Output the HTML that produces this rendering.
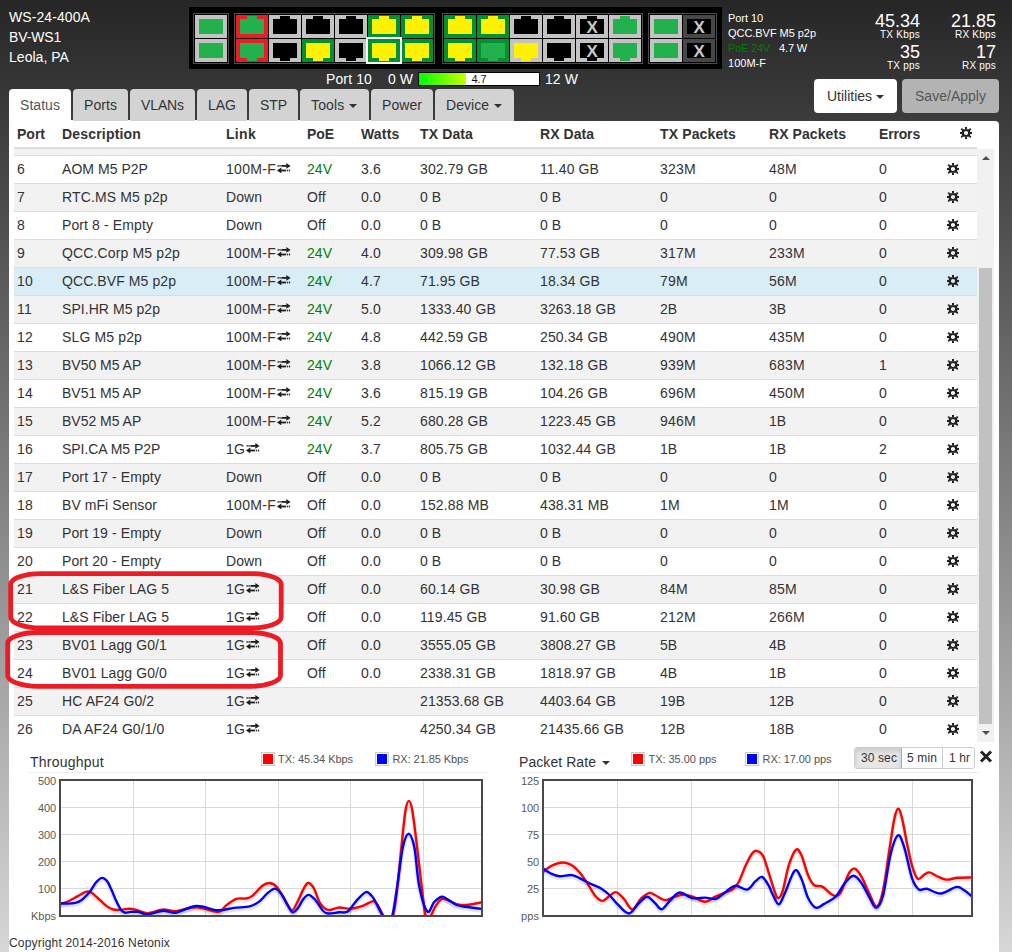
<!DOCTYPE html><html><head><meta charset="utf-8"><style>html,body{margin:0;padding:0;}body{width:1012px;height:952px;overflow:hidden;position:relative;font-family:"Liberation Sans",sans-serif;background:linear-gradient(180deg,#262626 0px,#d7d7d7 952px);}.t{position:absolute;white-space:pre;}.r{position:absolute;box-sizing:content-box;}</style></head><body>
<div class="t" style="left:9px;top:10.00px;font-size:14px;line-height:14px;color:#fff;font-weight:normal;letter-spacing:0.086px;">WS-24-400A</div>
<div class="t" style="left:9px;top:30.00px;font-size:14px;line-height:14px;color:#fff;font-weight:normal;letter-spacing:-0.113px;">BV-WS1</div>
<div class="t" style="left:9px;top:50.00px;font-size:14px;line-height:14px;color:#fff;font-weight:normal;letter-spacing:0.032px;">Leola, PA</div>
<div class="t" style="left:728px;top:13.00px;font-size:11px;line-height:11px;color:#fff;font-weight:normal;letter-spacing:-0.066px;">Port 10</div>
<div class="t" style="left:728px;top:28.00px;font-size:11px;line-height:11px;color:#fff;font-weight:normal;letter-spacing:-0.046px;">QCC.BVF M5 p2p</div>
<div class="t" style="left:728px;top:43.00px;font-size:11px;line-height:11px;color:#008000;font-weight:normal;letter-spacing:-0.203px;">PoE 24V</div>
<div class="t" style="left:779px;top:43.00px;font-size:11px;line-height:11px;color:#fff;font-weight:normal;letter-spacing:-0.146px;">4.7 W</div>
<div class="t" style="left:728px;top:58.00px;font-size:11px;line-height:11px;color:#fff;font-weight:normal;letter-spacing:0.017px;">100M-F</div>
<div class="t" style="right:92px;top:12.00px;font-size:18px;line-height:18px;color:#fff;font-weight:normal;">45.34</div>
<div class="t" style="right:92px;top:30.00px;font-size:10px;line-height:10px;color:#fff;font-weight:normal;letter-spacing:0.236px;">TX Kbps</div>
<div class="t" style="right:92px;top:43.00px;font-size:18px;line-height:18px;color:#fff;font-weight:normal;letter-spacing:-0.011px;">35</div>
<div class="t" style="right:92px;top:61.00px;font-size:10px;line-height:10px;color:#fff;font-weight:normal;letter-spacing:0.220px;">TX pps</div>
<div class="t" style="right:16px;top:12.00px;font-size:18px;line-height:18px;color:#fff;font-weight:normal;">21.85</div>
<div class="t" style="right:16px;top:30.00px;font-size:10px;line-height:10px;color:#fff;font-weight:normal;letter-spacing:0.220px;">RX Kbps</div>
<div class="t" style="right:16px;top:43.00px;font-size:18px;line-height:18px;color:#fff;font-weight:normal;letter-spacing:-0.011px;">17</div>
<div class="t" style="right:16px;top:61.00px;font-size:10px;line-height:10px;color:#fff;font-weight:normal;letter-spacing:0.201px;">RX pps</div>
<div class="t" style="left:326px;top:72.00px;font-size:14px;line-height:14px;color:#fff;font-weight:normal;letter-spacing:0.123px;">Port 10</div>
<div class="t" style="left:388px;top:72.00px;font-size:14px;line-height:14px;color:#fff;font-weight:normal;letter-spacing:0.037px;">0 W</div>
<div class="r" style="left:418px;top:72px;width:120px;height:12px;border:1px solid #000;background:#fff"></div>
<div class="r" style="left:419px;top:73px;width:47px;height:12px;background:linear-gradient(90deg,#00ff00,#c8ff00)"></div>
<div class="t" style="left:479px;transform:translateX(-50%);top:74.00px;font-size:11px;line-height:11px;color:#111;font-weight:normal;letter-spacing:-0.097px;">4.7</div>
<div class="t" style="left:545px;top:72.00px;font-size:14px;line-height:14px;color:#fff;font-weight:normal;letter-spacing:0.081px;">12 W</div>
<div class="r" style="left:189px;top:7px;width:533px;height:62px;background:#000;"></div>
<div class="r" style="left:193px;top:13px;width:34px;height:49px;border:1px solid #4d4d4d"></div>
<div class="r" style="left:234px;top:13px;width:199px;height:49px;border:1px solid #4d4d4d"></div>
<div class="r" style="left:442px;top:13px;width:199px;height:49px;border:1px solid #4d4d4d"></div>
<div class="r" style="left:648px;top:13px;width:67px;height:49px;border:1px solid #4d4d4d"></div>
<div class="r" style="left:195px;top:15px;width:32px;height:23px;background:#c3c3c3;"></div>
<div class="r" style="left:199px;top:19px;width:24px;height:15px;background:#22b14c;"></div>
<div class="r" style="left:195px;top:39px;width:32px;height:23px;background:#c3c3c3;"></div>
<div class="r" style="left:199px;top:43px;width:24px;height:15px;background:#22b14c;"></div>
<div class="r" style="left:236px;top:15px;width:32px;height:23px;background:#ed1c24;"></div>
<div class="r" style="left:240px;top:19px;width:24px;height:15px;background:#22b14c;"></div>
<div class="r" style="left:247px;top:16px;width:10px;height:3px;background:#22b14c;"></div>
<div class="r" style="left:269px;top:15px;width:32px;height:23px;background:#c3c3c3;"></div>
<div class="r" style="left:273px;top:19px;width:24px;height:15px;background:#000;"></div>
<div class="r" style="left:280px;top:16px;width:10px;height:3px;background:#000;"></div>
<div class="r" style="left:302px;top:15px;width:32px;height:23px;background:#c3c3c3;"></div>
<div class="r" style="left:306px;top:19px;width:24px;height:15px;background:#000;"></div>
<div class="r" style="left:313px;top:16px;width:10px;height:3px;background:#000;"></div>
<div class="r" style="left:335px;top:15px;width:32px;height:23px;background:#c3c3c3;"></div>
<div class="r" style="left:339px;top:19px;width:24px;height:15px;background:#000;"></div>
<div class="r" style="left:346px;top:16px;width:10px;height:3px;background:#000;"></div>
<div class="r" style="left:368px;top:15px;width:32px;height:23px;background:#00922e;"></div>
<div class="r" style="left:372px;top:19px;width:24px;height:15px;background:#fff200;"></div>
<div class="r" style="left:379px;top:16px;width:10px;height:3px;background:#fff200;"></div>
<div class="r" style="left:401px;top:15px;width:32px;height:23px;background:#00922e;"></div>
<div class="r" style="left:405px;top:19px;width:24px;height:15px;background:#fff200;"></div>
<div class="r" style="left:412px;top:16px;width:10px;height:3px;background:#fff200;"></div>
<div class="r" style="left:236px;top:39px;width:32px;height:23px;background:#ed1c24;"></div>
<div class="r" style="left:240px;top:43px;width:24px;height:15px;background:#22b14c;"></div>
<div class="r" style="left:247px;top:58px;width:10px;height:3px;background:#22b14c;"></div>
<div class="r" style="left:269px;top:39px;width:32px;height:23px;background:#c3c3c3;"></div>
<div class="r" style="left:273px;top:43px;width:24px;height:15px;background:#000;"></div>
<div class="r" style="left:280px;top:58px;width:10px;height:3px;background:#000;"></div>
<div class="r" style="left:302px;top:39px;width:32px;height:23px;background:#00922e;"></div>
<div class="r" style="left:306px;top:43px;width:24px;height:15px;background:#fff200;"></div>
<div class="r" style="left:313px;top:58px;width:10px;height:3px;background:#fff200;"></div>
<div class="r" style="left:335px;top:39px;width:32px;height:23px;background:#c3c3c3;"></div>
<div class="r" style="left:339px;top:43px;width:24px;height:15px;background:#000;"></div>
<div class="r" style="left:346px;top:58px;width:10px;height:3px;background:#000;"></div>
<div class="r" style="left:368px;top:39px;width:32px;height:23px;background:#00922e;"></div>
<div class="r" style="left:372px;top:43px;width:24px;height:15px;background:#fff200;"></div>
<div class="r" style="left:379px;top:58px;width:10px;height:3px;background:#fff200;"></div>
<div class="r" style="left:401px;top:39px;width:32px;height:23px;background:#00922e;"></div>
<div class="r" style="left:405px;top:43px;width:24px;height:15px;background:#fff200;"></div>
<div class="r" style="left:412px;top:58px;width:10px;height:3px;background:#fff200;"></div>
<div class="r" style="left:444px;top:15px;width:32px;height:23px;background:#00922e;"></div>
<div class="r" style="left:448px;top:19px;width:24px;height:15px;background:#fff200;"></div>
<div class="r" style="left:455px;top:16px;width:10px;height:3px;background:#fff200;"></div>
<div class="r" style="left:477px;top:15px;width:32px;height:23px;background:#00922e;"></div>
<div class="r" style="left:481px;top:19px;width:24px;height:15px;background:#fff200;"></div>
<div class="r" style="left:488px;top:16px;width:10px;height:3px;background:#fff200;"></div>
<div class="r" style="left:510px;top:15px;width:32px;height:23px;background:#c3c3c3;"></div>
<div class="r" style="left:514px;top:19px;width:24px;height:15px;background:#000;"></div>
<div class="r" style="left:521px;top:16px;width:10px;height:3px;background:#000;"></div>
<div class="r" style="left:543px;top:15px;width:32px;height:23px;background:#c3c3c3;"></div>
<div class="r" style="left:547px;top:19px;width:24px;height:15px;background:#000;"></div>
<div class="r" style="left:554px;top:16px;width:10px;height:3px;background:#000;"></div>
<div class="r" style="left:576px;top:15px;width:32px;height:23px;background:#c3c3c3;"></div>
<div class="r" style="left:580px;top:19px;width:24px;height:15px;background:#000;"></div>
<div class="r" style="left:587px;top:16px;width:10px;height:3px;background:#000;"></div>
<div class="t" style="left:592px;transform:translateX(-50%);top:19.00px;font-size:17px;line-height:17px;color:#c8c8c8;font-weight:bold;letter-spacing:-0.339px;">X</div>
<div class="r" style="left:609px;top:15px;width:32px;height:23px;background:#c3c3c3;"></div>
<div class="r" style="left:613px;top:19px;width:24px;height:15px;background:#22b14c;"></div>
<div class="r" style="left:620px;top:16px;width:10px;height:3px;background:#22b14c;"></div>
<div class="r" style="left:444px;top:39px;width:32px;height:23px;background:#00922e;"></div>
<div class="r" style="left:448px;top:43px;width:24px;height:15px;background:#fff200;"></div>
<div class="r" style="left:455px;top:58px;width:10px;height:3px;background:#fff200;"></div>
<div class="r" style="left:477px;top:39px;width:32px;height:23px;background:#00922e;"></div>
<div class="r" style="left:481px;top:43px;width:24px;height:15px;background:#22b14c;"></div>
<div class="r" style="left:488px;top:58px;width:10px;height:3px;background:#22b14c;"></div>
<div class="r" style="left:510px;top:39px;width:32px;height:23px;background:#c3c3c3;"></div>
<div class="r" style="left:514px;top:43px;width:24px;height:15px;background:#fff200;"></div>
<div class="r" style="left:521px;top:58px;width:10px;height:3px;background:#fff200;"></div>
<div class="r" style="left:543px;top:39px;width:32px;height:23px;background:#c3c3c3;"></div>
<div class="r" style="left:547px;top:43px;width:24px;height:15px;background:#000;"></div>
<div class="r" style="left:554px;top:58px;width:10px;height:3px;background:#000;"></div>
<div class="r" style="left:576px;top:39px;width:32px;height:23px;background:#c3c3c3;"></div>
<div class="r" style="left:580px;top:43px;width:24px;height:15px;background:#000;"></div>
<div class="r" style="left:587px;top:58px;width:10px;height:3px;background:#000;"></div>
<div class="t" style="left:592px;transform:translateX(-50%);top:43.00px;font-size:17px;line-height:17px;color:#c8c8c8;font-weight:bold;letter-spacing:-0.339px;">X</div>
<div class="r" style="left:609px;top:39px;width:32px;height:23px;background:#c3c3c3;"></div>
<div class="r" style="left:613px;top:43px;width:24px;height:15px;background:#22b14c;"></div>
<div class="r" style="left:620px;top:58px;width:10px;height:3px;background:#22b14c;"></div>
<div class="r" style="left:650px;top:15px;width:32px;height:23px;background:#c3c3c3;"></div>
<div class="r" style="left:654px;top:19px;width:24px;height:15px;background:#22b14c;"></div>
<div class="r" style="left:650px;top:39px;width:32px;height:23px;background:#c3c3c3;"></div>
<div class="r" style="left:654px;top:43px;width:24px;height:15px;background:#22b14c;"></div>
<div class="r" style="left:683px;top:15px;width:32px;height:23px;background:#474747;"></div>
<div class="r" style="left:687px;top:19px;width:24px;height:15px;background:#000;"></div>
<div class="t" style="left:699px;transform:translateX(-50%);top:19.00px;font-size:17px;line-height:17px;color:#c8c8c8;font-weight:bold;letter-spacing:-0.339px;">X</div>
<div class="r" style="left:683px;top:39px;width:32px;height:23px;background:#474747;"></div>
<div class="r" style="left:687px;top:43px;width:24px;height:15px;background:#000;"></div>
<div class="t" style="left:699px;transform:translateX(-50%);top:43.00px;font-size:17px;line-height:17px;color:#c8c8c8;font-weight:bold;letter-spacing:-0.339px;">X</div>
<div class="r" style="left:366px;top:37px;width:32px;height:23px;border:2px solid #fff"></div>
<div class="r" style="left:9px;top:121px;width:990px;height:831px;background:#fff;border-radius:0 4px 0 0"></div>
<div class="r" style="left:9px;top:120px;width:505px;height:1px;background:#fff;"></div>
<div class="r" style="left:9px;top:89px;width:62px;height:33px;background:#fff;border-radius:4px 4px 0 0"></div>
<div class="t" style="left:20px;top:98.00px;font-size:14px;line-height:14px;color:#555;font-weight:normal;letter-spacing:0.052px;">Status</div>
<div class="r" style="left:73px;top:89px;width:55px;height:32px;background:#d3d3d3;border-radius:4px 4px 0 0"></div>
<div class="t" style="left:84px;top:98.00px;font-size:14px;line-height:14px;color:#333;font-weight:normal;letter-spacing:0.065px;">Ports</div>
<div class="r" style="left:130px;top:89px;width:65px;height:32px;background:#d3d3d3;border-radius:4px 4px 0 0"></div>
<div class="t" style="left:141px;top:98.00px;font-size:14px;line-height:14px;color:#333;font-weight:normal;letter-spacing:-0.114px;">VLANs</div>
<div class="r" style="left:197px;top:89px;width:50px;height:32px;background:#d3d3d3;border-radius:4px 4px 0 0"></div>
<div class="t" style="left:208px;top:98.00px;font-size:14px;line-height:14px;color:#333;font-weight:normal;">LAG</div>
<div class="r" style="left:249px;top:89px;width:49px;height:32px;background:#d3d3d3;border-radius:4px 4px 0 0"></div>
<div class="t" style="left:260px;top:98.00px;font-size:14px;line-height:14px;color:#333;font-weight:normal;letter-spacing:-0.076px;">STP</div>
<div class="r" style="left:300px;top:89px;width:69px;height:32px;background:#d3d3d3;border-radius:4px 4px 0 0"></div>
<div class="t" style="left:311px;top:98.00px;font-size:14px;line-height:14px;color:#333;font-weight:normal;letter-spacing:0.153px;">Tools</div>
<div class="r" style="left:349px;top:104px;width:0;height:0;border-left:4px solid transparent;border-right:4px solid transparent;border-top:4px solid #333"></div>
<div class="r" style="left:371px;top:89px;width:62px;height:32px;background:#d3d3d3;border-radius:4px 4px 0 0"></div>
<div class="t" style="left:382px;top:98.00px;font-size:14px;line-height:14px;color:#333;font-weight:normal;letter-spacing:0.063px;">Power</div>
<div class="r" style="left:435px;top:89px;width:79px;height:32px;background:#d3d3d3;border-radius:4px 4px 0 0"></div>
<div class="t" style="left:446px;top:98.00px;font-size:14px;line-height:14px;color:#333;font-weight:normal;letter-spacing:0.035px;">Device</div>
<div class="r" style="left:494px;top:104px;width:0;height:0;border-left:4px solid transparent;border-right:4px solid transparent;border-top:4px solid #333"></div>
<div class="r" style="left:814px;top:79px;width:83px;height:34px;background:#fff;border-radius:4px"></div>
<div class="t" style="left:827px;top:89.00px;font-size:14px;line-height:14px;color:#333;font-weight:normal;letter-spacing:-0.013px;">Utilities</div>
<div class="r" style="left:876px;top:95px;width:0;height:0;border-left:4px solid transparent;border-right:4px solid transparent;border-top:4px solid #333"></div>
<div class="r" style="left:902px;top:79px;width:97px;height:34px;background:#b3b3b3;border-radius:4px"></div>
<div class="t" style="left:915px;top:89.00px;font-size:14px;line-height:14px;color:#555;font-weight:normal;letter-spacing:0.018px;">Save/Apply</div>
<div class="t" style="left:17px;top:127.00px;font-size:14px;line-height:14px;color:#333;font-weight:bold;">Port</div>
<div class="t" style="left:62px;top:127.00px;font-size:14px;line-height:14px;color:#333;font-weight:bold;letter-spacing:0.181px;">Description</div>
<div class="t" style="left:226px;top:127.00px;font-size:14px;line-height:14px;color:#333;font-weight:bold;letter-spacing:0.305px;">Link</div>
<div class="t" style="left:307px;top:127.00px;font-size:14px;line-height:14px;color:#333;font-weight:bold;letter-spacing:-0.076px;">PoE</div>
<div class="t" style="left:361px;top:127.00px;font-size:14px;line-height:14px;color:#333;font-weight:bold;letter-spacing:0.178px;">Watts</div>
<div class="t" style="left:420px;top:127.00px;font-size:14px;line-height:14px;color:#333;font-weight:bold;letter-spacing:0.125px;">TX Data</div>
<div class="t" style="left:540px;top:127.00px;font-size:14px;line-height:14px;color:#333;font-weight:bold;letter-spacing:0.045px;">RX Data</div>
<div class="t" style="left:660px;top:127.00px;font-size:14px;line-height:14px;color:#333;font-weight:bold;letter-spacing:0.129px;">TX Packets</div>
<div class="t" style="left:769px;top:127.00px;font-size:14px;line-height:14px;color:#333;font-weight:bold;letter-spacing:0.073px;">RX Packets</div>
<div class="t" style="left:879px;top:127.00px;font-size:14px;line-height:14px;color:#333;font-weight:bold;letter-spacing:-0.170px;">Errors</div>
<svg class="r" style="left:959px;top:126px" width="14" height="14" viewBox="-7 -7 14 14"><g fill="#222"><path fill-rule="evenodd" d="M-4.2,-3.7 L4.2,-3.7 L4.2,3.7 L-4.2,3.7 Z M2.1,0 A2.1,2.1 0 1 0 -2.1,0 A2.1,2.1 0 1 0 2.1,0 Z"/><rect x="-1" y="-6" width="2" height="2.4"/><rect x="-1" y="3.6" width="2" height="2.4"/><rect x="-6" y="-1" width="2" height="2"/><rect x="4" y="-1" width="2" height="2"/><rect x="-5.1" y="-4.6" width="1.7" height="1.7"/><rect x="3.4" y="-4.6" width="1.7" height="1.7"/><rect x="-5.1" y="2.9" width="1.7" height="1.7"/><rect x="3.4" y="2.9" width="1.7" height="1.7"/></g></svg>
<div class="r" style="left:14px;top:147px;width:963px;height:2px;background:#ddd;"></div>
<div class="r" style="left:14px;top:149px;width:963px;height:594px;overflow:hidden">
<div class="r" style="left:0;top:-22px;width:963px;height:27px;background:#f2f2f2;border-top:1px solid #ddd"></div>
<div class="r" style="left:0;top:6px;width:963px;height:27px;background:#fff;border-top:1px solid #ddd"></div>
<div class="t" style="left:3px;top:13.00px;font-size:14px;line-height:14px;color:#333;font-weight:normal;letter-spacing:0.214px;">6</div>
<div class="t" style="left:48px;top:13.00px;font-size:14px;line-height:14px;color:#333;font-weight:normal;letter-spacing:0.042px;">AOM M5 P2P</div>
<div class="t" style="left:212px;top:13.00px;font-size:14px;line-height:14px;color:#333;font-weight:normal;letter-spacing:0.294px;">100M-F</div>
<div class="t" style="left:293px;top:13.00px;font-size:14px;line-height:14px;color:#008000;font-weight:normal;letter-spacing:0.030px;">24V</div>
<div class="t" style="left:347px;top:13.00px;font-size:14px;line-height:14px;color:#333;font-weight:normal;letter-spacing:0.179px;">3.6</div>
<div class="t" style="left:406px;top:13.00px;font-size:14px;line-height:14px;color:#333;font-weight:normal;letter-spacing:0.118px;">302.79 GB</div>
<div class="t" style="left:526px;top:13.00px;font-size:14px;line-height:14px;color:#333;font-weight:normal;letter-spacing:0.106px;">11.40 GB</div>
<div class="t" style="left:646px;top:13.00px;font-size:14px;line-height:14px;color:#333;font-weight:normal;letter-spacing:0.245px;">323M</div>
<div class="t" style="left:755px;top:13.00px;font-size:14px;line-height:14px;color:#333;font-weight:normal;letter-spacing:0.255px;">48M</div>
<div class="t" style="left:865px;top:13.00px;font-size:14px;line-height:14px;color:#333;font-weight:normal;letter-spacing:0.214px;">0</div>
<svg class="r" style="left:263px;top:14px" width="14" height="10" viewBox="0 0 14 10"><g fill="#1e1e1e"><rect x="0.6" y="2" width="1.1" height="1.8"/><rect x="2.5" y="2" width="1.1" height="1.8"/><rect x="4.4" y="2" width="5.4" height="1.8"/><path d="M9.3 0 L13.6 2.9 L9.3 5.8 Z"/><rect x="3.8" y="6.6" width="5.4" height="1.8"/><rect x="10.1" y="6.6" width="1.1" height="1.8"/><rect x="12" y="6.6" width="1.1" height="1.8"/><path d="M4.3 4.6 L0 7.5 L4.3 10.4 Z"/></g></svg>
<svg class="r" style="left:932px;top:13px" width="14" height="14" viewBox="-7 -7 14 14"><g fill="#222"><path fill-rule="evenodd" d="M-4.2,-3.7 L4.2,-3.7 L4.2,3.7 L-4.2,3.7 Z M2.1,0 A2.1,2.1 0 1 0 -2.1,0 A2.1,2.1 0 1 0 2.1,0 Z"/><rect x="-1" y="-6" width="2" height="2.4"/><rect x="-1" y="3.6" width="2" height="2.4"/><rect x="-6" y="-1" width="2" height="2"/><rect x="4" y="-1" width="2" height="2"/><rect x="-5.1" y="-4.6" width="1.7" height="1.7"/><rect x="3.4" y="-4.6" width="1.7" height="1.7"/><rect x="-5.1" y="2.9" width="1.7" height="1.7"/><rect x="3.4" y="2.9" width="1.7" height="1.7"/></g></svg>
<div class="r" style="left:0;top:34px;width:963px;height:27px;background:#f2f2f2;border-top:1px solid #ddd"></div>
<div class="t" style="left:3px;top:41.00px;font-size:14px;line-height:14px;color:#333;font-weight:normal;letter-spacing:0.214px;">7</div>
<div class="t" style="left:48px;top:41.00px;font-size:14px;line-height:14px;color:#333;font-weight:normal;letter-spacing:0.135px;">RTC.MS M5 p2p</div>
<div class="t" style="left:212px;top:41.00px;font-size:14px;line-height:14px;color:#333;font-weight:normal;letter-spacing:0.052px;">Down</div>
<div class="t" style="left:293px;top:41.00px;font-size:14px;line-height:14px;color:#333;font-weight:normal;letter-spacing:0.110px;">Off</div>
<div class="t" style="left:347px;top:41.00px;font-size:14px;line-height:14px;color:#333;font-weight:normal;letter-spacing:0.179px;">0.0</div>
<div class="t" style="left:406px;top:41.00px;font-size:14px;line-height:14px;color:#333;font-weight:normal;">0 B</div>
<div class="t" style="left:526px;top:41.00px;font-size:14px;line-height:14px;color:#333;font-weight:normal;">0 B</div>
<div class="t" style="left:646px;top:41.00px;font-size:14px;line-height:14px;color:#333;font-weight:normal;letter-spacing:0.214px;">0</div>
<div class="t" style="left:755px;top:41.00px;font-size:14px;line-height:14px;color:#333;font-weight:normal;letter-spacing:0.214px;">0</div>
<div class="t" style="left:865px;top:41.00px;font-size:14px;line-height:14px;color:#333;font-weight:normal;letter-spacing:0.214px;">0</div>
<svg class="r" style="left:932px;top:41px" width="14" height="14" viewBox="-7 -7 14 14"><g fill="#222"><path fill-rule="evenodd" d="M-4.2,-3.7 L4.2,-3.7 L4.2,3.7 L-4.2,3.7 Z M2.1,0 A2.1,2.1 0 1 0 -2.1,0 A2.1,2.1 0 1 0 2.1,0 Z"/><rect x="-1" y="-6" width="2" height="2.4"/><rect x="-1" y="3.6" width="2" height="2.4"/><rect x="-6" y="-1" width="2" height="2"/><rect x="4" y="-1" width="2" height="2"/><rect x="-5.1" y="-4.6" width="1.7" height="1.7"/><rect x="3.4" y="-4.6" width="1.7" height="1.7"/><rect x="-5.1" y="2.9" width="1.7" height="1.7"/><rect x="3.4" y="2.9" width="1.7" height="1.7"/></g></svg>
<div class="r" style="left:0;top:62px;width:963px;height:27px;background:#fff;border-top:1px solid #ddd"></div>
<div class="t" style="left:3px;top:69.00px;font-size:14px;line-height:14px;color:#333;font-weight:normal;letter-spacing:0.214px;">8</div>
<div class="t" style="left:48px;top:69.00px;font-size:14px;line-height:14px;color:#333;font-weight:normal;letter-spacing:0.109px;">Port 8 - Empty</div>
<div class="t" style="left:212px;top:69.00px;font-size:14px;line-height:14px;color:#333;font-weight:normal;letter-spacing:0.052px;">Down</div>
<div class="t" style="left:293px;top:69.00px;font-size:14px;line-height:14px;color:#333;font-weight:normal;letter-spacing:0.110px;">Off</div>
<div class="t" style="left:347px;top:69.00px;font-size:14px;line-height:14px;color:#333;font-weight:normal;letter-spacing:0.179px;">0.0</div>
<div class="t" style="left:406px;top:69.00px;font-size:14px;line-height:14px;color:#333;font-weight:normal;">0 B</div>
<div class="t" style="left:526px;top:69.00px;font-size:14px;line-height:14px;color:#333;font-weight:normal;">0 B</div>
<div class="t" style="left:646px;top:69.00px;font-size:14px;line-height:14px;color:#333;font-weight:normal;letter-spacing:0.214px;">0</div>
<div class="t" style="left:755px;top:69.00px;font-size:14px;line-height:14px;color:#333;font-weight:normal;letter-spacing:0.214px;">0</div>
<div class="t" style="left:865px;top:69.00px;font-size:14px;line-height:14px;color:#333;font-weight:normal;letter-spacing:0.214px;">0</div>
<svg class="r" style="left:932px;top:69px" width="14" height="14" viewBox="-7 -7 14 14"><g fill="#222"><path fill-rule="evenodd" d="M-4.2,-3.7 L4.2,-3.7 L4.2,3.7 L-4.2,3.7 Z M2.1,0 A2.1,2.1 0 1 0 -2.1,0 A2.1,2.1 0 1 0 2.1,0 Z"/><rect x="-1" y="-6" width="2" height="2.4"/><rect x="-1" y="3.6" width="2" height="2.4"/><rect x="-6" y="-1" width="2" height="2"/><rect x="4" y="-1" width="2" height="2"/><rect x="-5.1" y="-4.6" width="1.7" height="1.7"/><rect x="3.4" y="-4.6" width="1.7" height="1.7"/><rect x="-5.1" y="2.9" width="1.7" height="1.7"/><rect x="3.4" y="2.9" width="1.7" height="1.7"/></g></svg>
<div class="r" style="left:0;top:90px;width:963px;height:27px;background:#f2f2f2;border-top:1px solid #ddd"></div>
<div class="t" style="left:3px;top:97.00px;font-size:14px;line-height:14px;color:#333;font-weight:normal;letter-spacing:0.214px;">9</div>
<div class="t" style="left:48px;top:97.00px;font-size:14px;line-height:14px;color:#333;font-weight:normal;letter-spacing:0.138px;">QCC.Corp M5 p2p</div>
<div class="t" style="left:212px;top:97.00px;font-size:14px;line-height:14px;color:#333;font-weight:normal;letter-spacing:0.294px;">100M-F</div>
<div class="t" style="left:293px;top:97.00px;font-size:14px;line-height:14px;color:#008000;font-weight:normal;letter-spacing:0.030px;">24V</div>
<div class="t" style="left:347px;top:97.00px;font-size:14px;line-height:14px;color:#333;font-weight:normal;letter-spacing:0.179px;">4.0</div>
<div class="t" style="left:406px;top:97.00px;font-size:14px;line-height:14px;color:#333;font-weight:normal;letter-spacing:0.118px;">309.98 GB</div>
<div class="t" style="left:526px;top:97.00px;font-size:14px;line-height:14px;color:#333;font-weight:normal;letter-spacing:0.106px;">77.53 GB</div>
<div class="t" style="left:646px;top:97.00px;font-size:14px;line-height:14px;color:#333;font-weight:normal;letter-spacing:0.245px;">317M</div>
<div class="t" style="left:755px;top:97.00px;font-size:14px;line-height:14px;color:#333;font-weight:normal;letter-spacing:0.245px;">233M</div>
<div class="t" style="left:865px;top:97.00px;font-size:14px;line-height:14px;color:#333;font-weight:normal;letter-spacing:0.214px;">0</div>
<svg class="r" style="left:263px;top:98px" width="14" height="10" viewBox="0 0 14 10"><g fill="#1e1e1e"><rect x="0.6" y="2" width="1.1" height="1.8"/><rect x="2.5" y="2" width="1.1" height="1.8"/><rect x="4.4" y="2" width="5.4" height="1.8"/><path d="M9.3 0 L13.6 2.9 L9.3 5.8 Z"/><rect x="3.8" y="6.6" width="5.4" height="1.8"/><rect x="10.1" y="6.6" width="1.1" height="1.8"/><rect x="12" y="6.6" width="1.1" height="1.8"/><path d="M4.3 4.6 L0 7.5 L4.3 10.4 Z"/></g></svg>
<svg class="r" style="left:932px;top:97px" width="14" height="14" viewBox="-7 -7 14 14"><g fill="#222"><path fill-rule="evenodd" d="M-4.2,-3.7 L4.2,-3.7 L4.2,3.7 L-4.2,3.7 Z M2.1,0 A2.1,2.1 0 1 0 -2.1,0 A2.1,2.1 0 1 0 2.1,0 Z"/><rect x="-1" y="-6" width="2" height="2.4"/><rect x="-1" y="3.6" width="2" height="2.4"/><rect x="-6" y="-1" width="2" height="2"/><rect x="4" y="-1" width="2" height="2"/><rect x="-5.1" y="-4.6" width="1.7" height="1.7"/><rect x="3.4" y="-4.6" width="1.7" height="1.7"/><rect x="-5.1" y="2.9" width="1.7" height="1.7"/><rect x="3.4" y="2.9" width="1.7" height="1.7"/></g></svg>
<div class="r" style="left:0;top:118px;width:963px;height:27px;background:#d9edf7;border-top:1px solid #ddd"></div>
<div class="t" style="left:3px;top:125.00px;font-size:14px;line-height:14px;color:#333;font-weight:normal;letter-spacing:0.214px;">10</div>
<div class="t" style="left:48px;top:125.00px;font-size:14px;line-height:14px;color:#333;font-weight:normal;letter-spacing:0.085px;">QCC.BVF M5 p2p</div>
<div class="t" style="left:212px;top:125.00px;font-size:14px;line-height:14px;color:#333;font-weight:normal;letter-spacing:0.294px;">100M-F</div>
<div class="t" style="left:293px;top:125.00px;font-size:14px;line-height:14px;color:#008000;font-weight:normal;letter-spacing:0.030px;">24V</div>
<div class="t" style="left:347px;top:125.00px;font-size:14px;line-height:14px;color:#333;font-weight:normal;letter-spacing:0.179px;">4.7</div>
<div class="t" style="left:406px;top:125.00px;font-size:14px;line-height:14px;color:#333;font-weight:normal;letter-spacing:0.106px;">71.95 GB</div>
<div class="t" style="left:526px;top:125.00px;font-size:14px;line-height:14px;color:#333;font-weight:normal;letter-spacing:0.106px;">18.34 GB</div>
<div class="t" style="left:646px;top:125.00px;font-size:14px;line-height:14px;color:#333;font-weight:normal;letter-spacing:0.255px;">79M</div>
<div class="t" style="left:755px;top:125.00px;font-size:14px;line-height:14px;color:#333;font-weight:normal;letter-spacing:0.255px;">56M</div>
<div class="t" style="left:865px;top:125.00px;font-size:14px;line-height:14px;color:#333;font-weight:normal;letter-spacing:0.214px;">0</div>
<svg class="r" style="left:263px;top:126px" width="14" height="10" viewBox="0 0 14 10"><g fill="#1e1e1e"><rect x="0.6" y="2" width="1.1" height="1.8"/><rect x="2.5" y="2" width="1.1" height="1.8"/><rect x="4.4" y="2" width="5.4" height="1.8"/><path d="M9.3 0 L13.6 2.9 L9.3 5.8 Z"/><rect x="3.8" y="6.6" width="5.4" height="1.8"/><rect x="10.1" y="6.6" width="1.1" height="1.8"/><rect x="12" y="6.6" width="1.1" height="1.8"/><path d="M4.3 4.6 L0 7.5 L4.3 10.4 Z"/></g></svg>
<svg class="r" style="left:932px;top:125px" width="14" height="14" viewBox="-7 -7 14 14"><g fill="#222"><path fill-rule="evenodd" d="M-4.2,-3.7 L4.2,-3.7 L4.2,3.7 L-4.2,3.7 Z M2.1,0 A2.1,2.1 0 1 0 -2.1,0 A2.1,2.1 0 1 0 2.1,0 Z"/><rect x="-1" y="-6" width="2" height="2.4"/><rect x="-1" y="3.6" width="2" height="2.4"/><rect x="-6" y="-1" width="2" height="2"/><rect x="4" y="-1" width="2" height="2"/><rect x="-5.1" y="-4.6" width="1.7" height="1.7"/><rect x="3.4" y="-4.6" width="1.7" height="1.7"/><rect x="-5.1" y="2.9" width="1.7" height="1.7"/><rect x="3.4" y="2.9" width="1.7" height="1.7"/></g></svg>
<div class="r" style="left:0;top:146px;width:963px;height:27px;background:#f2f2f2;border-top:1px solid #ddd"></div>
<div class="t" style="left:3px;top:153.00px;font-size:14px;line-height:14px;color:#333;font-weight:normal;letter-spacing:0.214px;">11</div>
<div class="t" style="left:48px;top:153.00px;font-size:14px;line-height:14px;color:#333;font-weight:normal;letter-spacing:0.057px;">SPI.HR M5 p2p</div>
<div class="t" style="left:212px;top:153.00px;font-size:14px;line-height:14px;color:#333;font-weight:normal;letter-spacing:0.294px;">100M-F</div>
<div class="t" style="left:293px;top:153.00px;font-size:14px;line-height:14px;color:#008000;font-weight:normal;letter-spacing:0.030px;">24V</div>
<div class="t" style="left:347px;top:153.00px;font-size:14px;line-height:14px;color:#333;font-weight:normal;letter-spacing:0.179px;">5.0</div>
<div class="t" style="left:406px;top:153.00px;font-size:14px;line-height:14px;color:#333;font-weight:normal;letter-spacing:0.128px;">1333.40 GB</div>
<div class="t" style="left:526px;top:153.00px;font-size:14px;line-height:14px;color:#333;font-weight:normal;letter-spacing:0.128px;">3263.18 GB</div>
<div class="t" style="left:646px;top:153.00px;font-size:14px;line-height:14px;color:#333;font-weight:normal;letter-spacing:-0.062px;">2B</div>
<div class="t" style="left:755px;top:153.00px;font-size:14px;line-height:14px;color:#333;font-weight:normal;letter-spacing:-0.062px;">3B</div>
<div class="t" style="left:865px;top:153.00px;font-size:14px;line-height:14px;color:#333;font-weight:normal;letter-spacing:0.214px;">0</div>
<svg class="r" style="left:263px;top:154px" width="14" height="10" viewBox="0 0 14 10"><g fill="#1e1e1e"><rect x="0.6" y="2" width="1.1" height="1.8"/><rect x="2.5" y="2" width="1.1" height="1.8"/><rect x="4.4" y="2" width="5.4" height="1.8"/><path d="M9.3 0 L13.6 2.9 L9.3 5.8 Z"/><rect x="3.8" y="6.6" width="5.4" height="1.8"/><rect x="10.1" y="6.6" width="1.1" height="1.8"/><rect x="12" y="6.6" width="1.1" height="1.8"/><path d="M4.3 4.6 L0 7.5 L4.3 10.4 Z"/></g></svg>
<svg class="r" style="left:932px;top:153px" width="14" height="14" viewBox="-7 -7 14 14"><g fill="#222"><path fill-rule="evenodd" d="M-4.2,-3.7 L4.2,-3.7 L4.2,3.7 L-4.2,3.7 Z M2.1,0 A2.1,2.1 0 1 0 -2.1,0 A2.1,2.1 0 1 0 2.1,0 Z"/><rect x="-1" y="-6" width="2" height="2.4"/><rect x="-1" y="3.6" width="2" height="2.4"/><rect x="-6" y="-1" width="2" height="2"/><rect x="4" y="-1" width="2" height="2"/><rect x="-5.1" y="-4.6" width="1.7" height="1.7"/><rect x="3.4" y="-4.6" width="1.7" height="1.7"/><rect x="-5.1" y="2.9" width="1.7" height="1.7"/><rect x="3.4" y="2.9" width="1.7" height="1.7"/></g></svg>
<div class="r" style="left:0;top:174px;width:963px;height:27px;background:#fff;border-top:1px solid #ddd"></div>
<div class="t" style="left:3px;top:181.00px;font-size:14px;line-height:14px;color:#333;font-weight:normal;letter-spacing:0.214px;">12</div>
<div class="t" style="left:48px;top:181.00px;font-size:14px;line-height:14px;color:#333;font-weight:normal;letter-spacing:0.140px;">SLG M5 p2p</div>
<div class="t" style="left:212px;top:181.00px;font-size:14px;line-height:14px;color:#333;font-weight:normal;letter-spacing:0.294px;">100M-F</div>
<div class="t" style="left:293px;top:181.00px;font-size:14px;line-height:14px;color:#008000;font-weight:normal;letter-spacing:0.030px;">24V</div>
<div class="t" style="left:347px;top:181.00px;font-size:14px;line-height:14px;color:#333;font-weight:normal;letter-spacing:0.179px;">4.8</div>
<div class="t" style="left:406px;top:181.00px;font-size:14px;line-height:14px;color:#333;font-weight:normal;letter-spacing:0.118px;">442.59 GB</div>
<div class="t" style="left:526px;top:181.00px;font-size:14px;line-height:14px;color:#333;font-weight:normal;letter-spacing:0.118px;">250.34 GB</div>
<div class="t" style="left:646px;top:181.00px;font-size:14px;line-height:14px;color:#333;font-weight:normal;letter-spacing:0.245px;">490M</div>
<div class="t" style="left:755px;top:181.00px;font-size:14px;line-height:14px;color:#333;font-weight:normal;letter-spacing:0.245px;">435M</div>
<div class="t" style="left:865px;top:181.00px;font-size:14px;line-height:14px;color:#333;font-weight:normal;letter-spacing:0.214px;">0</div>
<svg class="r" style="left:263px;top:182px" width="14" height="10" viewBox="0 0 14 10"><g fill="#1e1e1e"><rect x="0.6" y="2" width="1.1" height="1.8"/><rect x="2.5" y="2" width="1.1" height="1.8"/><rect x="4.4" y="2" width="5.4" height="1.8"/><path d="M9.3 0 L13.6 2.9 L9.3 5.8 Z"/><rect x="3.8" y="6.6" width="5.4" height="1.8"/><rect x="10.1" y="6.6" width="1.1" height="1.8"/><rect x="12" y="6.6" width="1.1" height="1.8"/><path d="M4.3 4.6 L0 7.5 L4.3 10.4 Z"/></g></svg>
<svg class="r" style="left:932px;top:181px" width="14" height="14" viewBox="-7 -7 14 14"><g fill="#222"><path fill-rule="evenodd" d="M-4.2,-3.7 L4.2,-3.7 L4.2,3.7 L-4.2,3.7 Z M2.1,0 A2.1,2.1 0 1 0 -2.1,0 A2.1,2.1 0 1 0 2.1,0 Z"/><rect x="-1" y="-6" width="2" height="2.4"/><rect x="-1" y="3.6" width="2" height="2.4"/><rect x="-6" y="-1" width="2" height="2"/><rect x="4" y="-1" width="2" height="2"/><rect x="-5.1" y="-4.6" width="1.7" height="1.7"/><rect x="3.4" y="-4.6" width="1.7" height="1.7"/><rect x="-5.1" y="2.9" width="1.7" height="1.7"/><rect x="3.4" y="2.9" width="1.7" height="1.7"/></g></svg>
<div class="r" style="left:0;top:202px;width:963px;height:27px;background:#f2f2f2;border-top:1px solid #ddd"></div>
<div class="t" style="left:3px;top:209.00px;font-size:14px;line-height:14px;color:#333;font-weight:normal;letter-spacing:0.214px;">13</div>
<div class="t" style="left:48px;top:209.00px;font-size:14px;line-height:14px;color:#333;font-weight:normal;letter-spacing:-0.015px;">BV50 M5 AP</div>
<div class="t" style="left:212px;top:209.00px;font-size:14px;line-height:14px;color:#333;font-weight:normal;letter-spacing:0.294px;">100M-F</div>
<div class="t" style="left:293px;top:209.00px;font-size:14px;line-height:14px;color:#008000;font-weight:normal;letter-spacing:0.030px;">24V</div>
<div class="t" style="left:347px;top:209.00px;font-size:14px;line-height:14px;color:#333;font-weight:normal;letter-spacing:0.179px;">3.8</div>
<div class="t" style="left:406px;top:209.00px;font-size:14px;line-height:14px;color:#333;font-weight:normal;letter-spacing:0.128px;">1066.12 GB</div>
<div class="t" style="left:526px;top:209.00px;font-size:14px;line-height:14px;color:#333;font-weight:normal;letter-spacing:0.118px;">132.18 GB</div>
<div class="t" style="left:646px;top:209.00px;font-size:14px;line-height:14px;color:#333;font-weight:normal;letter-spacing:0.245px;">939M</div>
<div class="t" style="left:755px;top:209.00px;font-size:14px;line-height:14px;color:#333;font-weight:normal;letter-spacing:0.245px;">683M</div>
<div class="t" style="left:865px;top:209.00px;font-size:14px;line-height:14px;color:#333;font-weight:normal;letter-spacing:0.214px;">1</div>
<svg class="r" style="left:263px;top:210px" width="14" height="10" viewBox="0 0 14 10"><g fill="#1e1e1e"><rect x="0.6" y="2" width="1.1" height="1.8"/><rect x="2.5" y="2" width="1.1" height="1.8"/><rect x="4.4" y="2" width="5.4" height="1.8"/><path d="M9.3 0 L13.6 2.9 L9.3 5.8 Z"/><rect x="3.8" y="6.6" width="5.4" height="1.8"/><rect x="10.1" y="6.6" width="1.1" height="1.8"/><rect x="12" y="6.6" width="1.1" height="1.8"/><path d="M4.3 4.6 L0 7.5 L4.3 10.4 Z"/></g></svg>
<svg class="r" style="left:932px;top:209px" width="14" height="14" viewBox="-7 -7 14 14"><g fill="#222"><path fill-rule="evenodd" d="M-4.2,-3.7 L4.2,-3.7 L4.2,3.7 L-4.2,3.7 Z M2.1,0 A2.1,2.1 0 1 0 -2.1,0 A2.1,2.1 0 1 0 2.1,0 Z"/><rect x="-1" y="-6" width="2" height="2.4"/><rect x="-1" y="3.6" width="2" height="2.4"/><rect x="-6" y="-1" width="2" height="2"/><rect x="4" y="-1" width="2" height="2"/><rect x="-5.1" y="-4.6" width="1.7" height="1.7"/><rect x="3.4" y="-4.6" width="1.7" height="1.7"/><rect x="-5.1" y="2.9" width="1.7" height="1.7"/><rect x="3.4" y="2.9" width="1.7" height="1.7"/></g></svg>
<div class="r" style="left:0;top:230px;width:963px;height:27px;background:#fff;border-top:1px solid #ddd"></div>
<div class="t" style="left:3px;top:237.00px;font-size:14px;line-height:14px;color:#333;font-weight:normal;letter-spacing:0.214px;">14</div>
<div class="t" style="left:48px;top:237.00px;font-size:14px;line-height:14px;color:#333;font-weight:normal;letter-spacing:-0.015px;">BV51 M5 AP</div>
<div class="t" style="left:212px;top:237.00px;font-size:14px;line-height:14px;color:#333;font-weight:normal;letter-spacing:0.294px;">100M-F</div>
<div class="t" style="left:293px;top:237.00px;font-size:14px;line-height:14px;color:#008000;font-weight:normal;letter-spacing:0.030px;">24V</div>
<div class="t" style="left:347px;top:237.00px;font-size:14px;line-height:14px;color:#333;font-weight:normal;letter-spacing:0.179px;">3.6</div>
<div class="t" style="left:406px;top:237.00px;font-size:14px;line-height:14px;color:#333;font-weight:normal;letter-spacing:0.118px;">815.19 GB</div>
<div class="t" style="left:526px;top:237.00px;font-size:14px;line-height:14px;color:#333;font-weight:normal;letter-spacing:0.118px;">104.26 GB</div>
<div class="t" style="left:646px;top:237.00px;font-size:14px;line-height:14px;color:#333;font-weight:normal;letter-spacing:0.245px;">696M</div>
<div class="t" style="left:755px;top:237.00px;font-size:14px;line-height:14px;color:#333;font-weight:normal;letter-spacing:0.245px;">450M</div>
<div class="t" style="left:865px;top:237.00px;font-size:14px;line-height:14px;color:#333;font-weight:normal;letter-spacing:0.214px;">0</div>
<svg class="r" style="left:263px;top:238px" width="14" height="10" viewBox="0 0 14 10"><g fill="#1e1e1e"><rect x="0.6" y="2" width="1.1" height="1.8"/><rect x="2.5" y="2" width="1.1" height="1.8"/><rect x="4.4" y="2" width="5.4" height="1.8"/><path d="M9.3 0 L13.6 2.9 L9.3 5.8 Z"/><rect x="3.8" y="6.6" width="5.4" height="1.8"/><rect x="10.1" y="6.6" width="1.1" height="1.8"/><rect x="12" y="6.6" width="1.1" height="1.8"/><path d="M4.3 4.6 L0 7.5 L4.3 10.4 Z"/></g></svg>
<svg class="r" style="left:932px;top:237px" width="14" height="14" viewBox="-7 -7 14 14"><g fill="#222"><path fill-rule="evenodd" d="M-4.2,-3.7 L4.2,-3.7 L4.2,3.7 L-4.2,3.7 Z M2.1,0 A2.1,2.1 0 1 0 -2.1,0 A2.1,2.1 0 1 0 2.1,0 Z"/><rect x="-1" y="-6" width="2" height="2.4"/><rect x="-1" y="3.6" width="2" height="2.4"/><rect x="-6" y="-1" width="2" height="2"/><rect x="4" y="-1" width="2" height="2"/><rect x="-5.1" y="-4.6" width="1.7" height="1.7"/><rect x="3.4" y="-4.6" width="1.7" height="1.7"/><rect x="-5.1" y="2.9" width="1.7" height="1.7"/><rect x="3.4" y="2.9" width="1.7" height="1.7"/></g></svg>
<div class="r" style="left:0;top:258px;width:963px;height:27px;background:#f2f2f2;border-top:1px solid #ddd"></div>
<div class="t" style="left:3px;top:265.00px;font-size:14px;line-height:14px;color:#333;font-weight:normal;letter-spacing:0.214px;">15</div>
<div class="t" style="left:48px;top:265.00px;font-size:14px;line-height:14px;color:#333;font-weight:normal;letter-spacing:-0.015px;">BV52 M5 AP</div>
<div class="t" style="left:212px;top:265.00px;font-size:14px;line-height:14px;color:#333;font-weight:normal;letter-spacing:0.294px;">100M-F</div>
<div class="t" style="left:293px;top:265.00px;font-size:14px;line-height:14px;color:#008000;font-weight:normal;letter-spacing:0.030px;">24V</div>
<div class="t" style="left:347px;top:265.00px;font-size:14px;line-height:14px;color:#333;font-weight:normal;letter-spacing:0.179px;">5.2</div>
<div class="t" style="left:406px;top:265.00px;font-size:14px;line-height:14px;color:#333;font-weight:normal;letter-spacing:0.118px;">680.28 GB</div>
<div class="t" style="left:526px;top:265.00px;font-size:14px;line-height:14px;color:#333;font-weight:normal;letter-spacing:0.128px;">1223.45 GB</div>
<div class="t" style="left:646px;top:265.00px;font-size:14px;line-height:14px;color:#333;font-weight:normal;letter-spacing:0.245px;">946M</div>
<div class="t" style="left:755px;top:265.00px;font-size:14px;line-height:14px;color:#333;font-weight:normal;letter-spacing:-0.062px;">1B</div>
<div class="t" style="left:865px;top:265.00px;font-size:14px;line-height:14px;color:#333;font-weight:normal;letter-spacing:0.214px;">0</div>
<svg class="r" style="left:263px;top:266px" width="14" height="10" viewBox="0 0 14 10"><g fill="#1e1e1e"><rect x="0.6" y="2" width="1.1" height="1.8"/><rect x="2.5" y="2" width="1.1" height="1.8"/><rect x="4.4" y="2" width="5.4" height="1.8"/><path d="M9.3 0 L13.6 2.9 L9.3 5.8 Z"/><rect x="3.8" y="6.6" width="5.4" height="1.8"/><rect x="10.1" y="6.6" width="1.1" height="1.8"/><rect x="12" y="6.6" width="1.1" height="1.8"/><path d="M4.3 4.6 L0 7.5 L4.3 10.4 Z"/></g></svg>
<svg class="r" style="left:932px;top:265px" width="14" height="14" viewBox="-7 -7 14 14"><g fill="#222"><path fill-rule="evenodd" d="M-4.2,-3.7 L4.2,-3.7 L4.2,3.7 L-4.2,3.7 Z M2.1,0 A2.1,2.1 0 1 0 -2.1,0 A2.1,2.1 0 1 0 2.1,0 Z"/><rect x="-1" y="-6" width="2" height="2.4"/><rect x="-1" y="3.6" width="2" height="2.4"/><rect x="-6" y="-1" width="2" height="2"/><rect x="4" y="-1" width="2" height="2"/><rect x="-5.1" y="-4.6" width="1.7" height="1.7"/><rect x="3.4" y="-4.6" width="1.7" height="1.7"/><rect x="-5.1" y="2.9" width="1.7" height="1.7"/><rect x="3.4" y="2.9" width="1.7" height="1.7"/></g></svg>
<div class="r" style="left:0;top:286px;width:963px;height:27px;background:#fff;border-top:1px solid #ddd"></div>
<div class="t" style="left:3px;top:293.00px;font-size:14px;line-height:14px;color:#333;font-weight:normal;letter-spacing:0.214px;">16</div>
<div class="t" style="left:48px;top:293.00px;font-size:14px;line-height:14px;color:#333;font-weight:normal;letter-spacing:-0.046px;">SPI.CA M5 P2P</div>
<div class="t" style="left:212px;top:293.00px;font-size:14px;line-height:14px;color:#333;font-weight:normal;letter-spacing:0.162px;">1G</div>
<div class="t" style="left:293px;top:293.00px;font-size:14px;line-height:14px;color:#008000;font-weight:normal;letter-spacing:0.030px;">24V</div>
<div class="t" style="left:347px;top:293.00px;font-size:14px;line-height:14px;color:#333;font-weight:normal;letter-spacing:0.179px;">3.7</div>
<div class="t" style="left:406px;top:293.00px;font-size:14px;line-height:14px;color:#333;font-weight:normal;letter-spacing:0.118px;">805.75 GB</div>
<div class="t" style="left:526px;top:293.00px;font-size:14px;line-height:14px;color:#333;font-weight:normal;letter-spacing:0.128px;">1032.44 GB</div>
<div class="t" style="left:646px;top:293.00px;font-size:14px;line-height:14px;color:#333;font-weight:normal;letter-spacing:-0.062px;">1B</div>
<div class="t" style="left:755px;top:293.00px;font-size:14px;line-height:14px;color:#333;font-weight:normal;letter-spacing:-0.062px;">1B</div>
<div class="t" style="left:865px;top:293.00px;font-size:14px;line-height:14px;color:#333;font-weight:normal;letter-spacing:0.214px;">2</div>
<svg class="r" style="left:232px;top:294px" width="14" height="10" viewBox="0 0 14 10"><g fill="#1e1e1e"><rect x="0.6" y="2" width="1.1" height="1.8"/><rect x="2.5" y="2" width="1.1" height="1.8"/><rect x="4.4" y="2" width="5.4" height="1.8"/><path d="M9.3 0 L13.6 2.9 L9.3 5.8 Z"/><rect x="3.8" y="6.6" width="5.4" height="1.8"/><rect x="10.1" y="6.6" width="1.1" height="1.8"/><rect x="12" y="6.6" width="1.1" height="1.8"/><path d="M4.3 4.6 L0 7.5 L4.3 10.4 Z"/></g></svg>
<svg class="r" style="left:932px;top:293px" width="14" height="14" viewBox="-7 -7 14 14"><g fill="#222"><path fill-rule="evenodd" d="M-4.2,-3.7 L4.2,-3.7 L4.2,3.7 L-4.2,3.7 Z M2.1,0 A2.1,2.1 0 1 0 -2.1,0 A2.1,2.1 0 1 0 2.1,0 Z"/><rect x="-1" y="-6" width="2" height="2.4"/><rect x="-1" y="3.6" width="2" height="2.4"/><rect x="-6" y="-1" width="2" height="2"/><rect x="4" y="-1" width="2" height="2"/><rect x="-5.1" y="-4.6" width="1.7" height="1.7"/><rect x="3.4" y="-4.6" width="1.7" height="1.7"/><rect x="-5.1" y="2.9" width="1.7" height="1.7"/><rect x="3.4" y="2.9" width="1.7" height="1.7"/></g></svg>
<div class="r" style="left:0;top:314px;width:963px;height:27px;background:#f2f2f2;border-top:1px solid #ddd"></div>
<div class="t" style="left:3px;top:321.00px;font-size:14px;line-height:14px;color:#333;font-weight:normal;letter-spacing:0.214px;">17</div>
<div class="t" style="left:48px;top:321.00px;font-size:14px;line-height:14px;color:#333;font-weight:normal;letter-spacing:0.116px;">Port 17 - Empty</div>
<div class="t" style="left:212px;top:321.00px;font-size:14px;line-height:14px;color:#333;font-weight:normal;letter-spacing:0.052px;">Down</div>
<div class="t" style="left:293px;top:321.00px;font-size:14px;line-height:14px;color:#333;font-weight:normal;letter-spacing:0.110px;">Off</div>
<div class="t" style="left:347px;top:321.00px;font-size:14px;line-height:14px;color:#333;font-weight:normal;letter-spacing:0.179px;">0.0</div>
<div class="t" style="left:406px;top:321.00px;font-size:14px;line-height:14px;color:#333;font-weight:normal;">0 B</div>
<div class="t" style="left:526px;top:321.00px;font-size:14px;line-height:14px;color:#333;font-weight:normal;">0 B</div>
<div class="t" style="left:646px;top:321.00px;font-size:14px;line-height:14px;color:#333;font-weight:normal;letter-spacing:0.214px;">0</div>
<div class="t" style="left:755px;top:321.00px;font-size:14px;line-height:14px;color:#333;font-weight:normal;letter-spacing:0.214px;">0</div>
<div class="t" style="left:865px;top:321.00px;font-size:14px;line-height:14px;color:#333;font-weight:normal;letter-spacing:0.214px;">0</div>
<svg class="r" style="left:932px;top:321px" width="14" height="14" viewBox="-7 -7 14 14"><g fill="#222"><path fill-rule="evenodd" d="M-4.2,-3.7 L4.2,-3.7 L4.2,3.7 L-4.2,3.7 Z M2.1,0 A2.1,2.1 0 1 0 -2.1,0 A2.1,2.1 0 1 0 2.1,0 Z"/><rect x="-1" y="-6" width="2" height="2.4"/><rect x="-1" y="3.6" width="2" height="2.4"/><rect x="-6" y="-1" width="2" height="2"/><rect x="4" y="-1" width="2" height="2"/><rect x="-5.1" y="-4.6" width="1.7" height="1.7"/><rect x="3.4" y="-4.6" width="1.7" height="1.7"/><rect x="-5.1" y="2.9" width="1.7" height="1.7"/><rect x="3.4" y="2.9" width="1.7" height="1.7"/></g></svg>
<div class="r" style="left:0;top:342px;width:963px;height:27px;background:#fff;border-top:1px solid #ddd"></div>
<div class="t" style="left:3px;top:349.00px;font-size:14px;line-height:14px;color:#333;font-weight:normal;letter-spacing:0.214px;">18</div>
<div class="t" style="left:48px;top:349.00px;font-size:14px;line-height:14px;color:#333;font-weight:normal;letter-spacing:0.066px;">BV mFi Sensor</div>
<div class="t" style="left:212px;top:349.00px;font-size:14px;line-height:14px;color:#333;font-weight:normal;letter-spacing:0.294px;">100M-F</div>
<div class="t" style="left:293px;top:349.00px;font-size:14px;line-height:14px;color:#333;font-weight:normal;letter-spacing:0.110px;">Off</div>
<div class="t" style="left:347px;top:349.00px;font-size:14px;line-height:14px;color:#333;font-weight:normal;letter-spacing:0.179px;">0.0</div>
<div class="t" style="left:406px;top:349.00px;font-size:14px;line-height:14px;color:#333;font-weight:normal;letter-spacing:0.143px;">152.88 MB</div>
<div class="t" style="left:526px;top:349.00px;font-size:14px;line-height:14px;color:#333;font-weight:normal;letter-spacing:0.143px;">438.31 MB</div>
<div class="t" style="left:646px;top:349.00px;font-size:14px;line-height:14px;color:#333;font-weight:normal;letter-spacing:0.276px;">1M</div>
<div class="t" style="left:755px;top:349.00px;font-size:14px;line-height:14px;color:#333;font-weight:normal;letter-spacing:0.276px;">1M</div>
<div class="t" style="left:865px;top:349.00px;font-size:14px;line-height:14px;color:#333;font-weight:normal;letter-spacing:0.214px;">0</div>
<svg class="r" style="left:263px;top:350px" width="14" height="10" viewBox="0 0 14 10"><g fill="#1e1e1e"><rect x="0.6" y="2" width="1.1" height="1.8"/><rect x="2.5" y="2" width="1.1" height="1.8"/><rect x="4.4" y="2" width="5.4" height="1.8"/><path d="M9.3 0 L13.6 2.9 L9.3 5.8 Z"/><rect x="3.8" y="6.6" width="5.4" height="1.8"/><rect x="10.1" y="6.6" width="1.1" height="1.8"/><rect x="12" y="6.6" width="1.1" height="1.8"/><path d="M4.3 4.6 L0 7.5 L4.3 10.4 Z"/></g></svg>
<svg class="r" style="left:932px;top:349px" width="14" height="14" viewBox="-7 -7 14 14"><g fill="#222"><path fill-rule="evenodd" d="M-4.2,-3.7 L4.2,-3.7 L4.2,3.7 L-4.2,3.7 Z M2.1,0 A2.1,2.1 0 1 0 -2.1,0 A2.1,2.1 0 1 0 2.1,0 Z"/><rect x="-1" y="-6" width="2" height="2.4"/><rect x="-1" y="3.6" width="2" height="2.4"/><rect x="-6" y="-1" width="2" height="2"/><rect x="4" y="-1" width="2" height="2"/><rect x="-5.1" y="-4.6" width="1.7" height="1.7"/><rect x="3.4" y="-4.6" width="1.7" height="1.7"/><rect x="-5.1" y="2.9" width="1.7" height="1.7"/><rect x="3.4" y="2.9" width="1.7" height="1.7"/></g></svg>
<div class="r" style="left:0;top:370px;width:963px;height:27px;background:#f2f2f2;border-top:1px solid #ddd"></div>
<div class="t" style="left:3px;top:377.00px;font-size:14px;line-height:14px;color:#333;font-weight:normal;letter-spacing:0.214px;">19</div>
<div class="t" style="left:48px;top:377.00px;font-size:14px;line-height:14px;color:#333;font-weight:normal;letter-spacing:0.116px;">Port 19 - Empty</div>
<div class="t" style="left:212px;top:377.00px;font-size:14px;line-height:14px;color:#333;font-weight:normal;letter-spacing:0.052px;">Down</div>
<div class="t" style="left:293px;top:377.00px;font-size:14px;line-height:14px;color:#333;font-weight:normal;letter-spacing:0.110px;">Off</div>
<div class="t" style="left:347px;top:377.00px;font-size:14px;line-height:14px;color:#333;font-weight:normal;letter-spacing:0.179px;">0.0</div>
<div class="t" style="left:406px;top:377.00px;font-size:14px;line-height:14px;color:#333;font-weight:normal;">0 B</div>
<div class="t" style="left:526px;top:377.00px;font-size:14px;line-height:14px;color:#333;font-weight:normal;">0 B</div>
<div class="t" style="left:646px;top:377.00px;font-size:14px;line-height:14px;color:#333;font-weight:normal;letter-spacing:0.214px;">0</div>
<div class="t" style="left:755px;top:377.00px;font-size:14px;line-height:14px;color:#333;font-weight:normal;letter-spacing:0.214px;">0</div>
<div class="t" style="left:865px;top:377.00px;font-size:14px;line-height:14px;color:#333;font-weight:normal;letter-spacing:0.214px;">0</div>
<svg class="r" style="left:932px;top:377px" width="14" height="14" viewBox="-7 -7 14 14"><g fill="#222"><path fill-rule="evenodd" d="M-4.2,-3.7 L4.2,-3.7 L4.2,3.7 L-4.2,3.7 Z M2.1,0 A2.1,2.1 0 1 0 -2.1,0 A2.1,2.1 0 1 0 2.1,0 Z"/><rect x="-1" y="-6" width="2" height="2.4"/><rect x="-1" y="3.6" width="2" height="2.4"/><rect x="-6" y="-1" width="2" height="2"/><rect x="4" y="-1" width="2" height="2"/><rect x="-5.1" y="-4.6" width="1.7" height="1.7"/><rect x="3.4" y="-4.6" width="1.7" height="1.7"/><rect x="-5.1" y="2.9" width="1.7" height="1.7"/><rect x="3.4" y="2.9" width="1.7" height="1.7"/></g></svg>
<div class="r" style="left:0;top:398px;width:963px;height:27px;background:#fff;border-top:1px solid #ddd"></div>
<div class="t" style="left:3px;top:405.00px;font-size:14px;line-height:14px;color:#333;font-weight:normal;letter-spacing:0.214px;">20</div>
<div class="t" style="left:48px;top:405.00px;font-size:14px;line-height:14px;color:#333;font-weight:normal;letter-spacing:0.116px;">Port 20 - Empty</div>
<div class="t" style="left:212px;top:405.00px;font-size:14px;line-height:14px;color:#333;font-weight:normal;letter-spacing:0.052px;">Down</div>
<div class="t" style="left:293px;top:405.00px;font-size:14px;line-height:14px;color:#333;font-weight:normal;letter-spacing:0.110px;">Off</div>
<div class="t" style="left:347px;top:405.00px;font-size:14px;line-height:14px;color:#333;font-weight:normal;letter-spacing:0.179px;">0.0</div>
<div class="t" style="left:406px;top:405.00px;font-size:14px;line-height:14px;color:#333;font-weight:normal;">0 B</div>
<div class="t" style="left:526px;top:405.00px;font-size:14px;line-height:14px;color:#333;font-weight:normal;">0 B</div>
<div class="t" style="left:646px;top:405.00px;font-size:14px;line-height:14px;color:#333;font-weight:normal;letter-spacing:0.214px;">0</div>
<div class="t" style="left:755px;top:405.00px;font-size:14px;line-height:14px;color:#333;font-weight:normal;letter-spacing:0.214px;">0</div>
<div class="t" style="left:865px;top:405.00px;font-size:14px;line-height:14px;color:#333;font-weight:normal;letter-spacing:0.214px;">0</div>
<svg class="r" style="left:932px;top:405px" width="14" height="14" viewBox="-7 -7 14 14"><g fill="#222"><path fill-rule="evenodd" d="M-4.2,-3.7 L4.2,-3.7 L4.2,3.7 L-4.2,3.7 Z M2.1,0 A2.1,2.1 0 1 0 -2.1,0 A2.1,2.1 0 1 0 2.1,0 Z"/><rect x="-1" y="-6" width="2" height="2.4"/><rect x="-1" y="3.6" width="2" height="2.4"/><rect x="-6" y="-1" width="2" height="2"/><rect x="4" y="-1" width="2" height="2"/><rect x="-5.1" y="-4.6" width="1.7" height="1.7"/><rect x="3.4" y="-4.6" width="1.7" height="1.7"/><rect x="-5.1" y="2.9" width="1.7" height="1.7"/><rect x="3.4" y="2.9" width="1.7" height="1.7"/></g></svg>
<div class="r" style="left:0;top:426px;width:963px;height:27px;background:#f2f2f2;border-top:1px solid #ddd"></div>
<div class="t" style="left:3px;top:433.00px;font-size:14px;line-height:14px;color:#333;font-weight:normal;letter-spacing:0.214px;">21</div>
<div class="t" style="left:48px;top:433.00px;font-size:14px;line-height:14px;color:#333;font-weight:normal;letter-spacing:0.078px;">L&amp;S Fiber LAG 5</div>
<div class="t" style="left:212px;top:433.00px;font-size:14px;line-height:14px;color:#333;font-weight:normal;letter-spacing:0.162px;">1G</div>
<div class="t" style="left:293px;top:433.00px;font-size:14px;line-height:14px;color:#333;font-weight:normal;letter-spacing:0.110px;">Off</div>
<div class="t" style="left:347px;top:433.00px;font-size:14px;line-height:14px;color:#333;font-weight:normal;letter-spacing:0.179px;">0.0</div>
<div class="t" style="left:406px;top:433.00px;font-size:14px;line-height:14px;color:#333;font-weight:normal;letter-spacing:0.106px;">60.14 GB</div>
<div class="t" style="left:526px;top:433.00px;font-size:14px;line-height:14px;color:#333;font-weight:normal;letter-spacing:0.106px;">30.98 GB</div>
<div class="t" style="left:646px;top:433.00px;font-size:14px;line-height:14px;color:#333;font-weight:normal;letter-spacing:0.255px;">84M</div>
<div class="t" style="left:755px;top:433.00px;font-size:14px;line-height:14px;color:#333;font-weight:normal;letter-spacing:0.255px;">85M</div>
<div class="t" style="left:865px;top:433.00px;font-size:14px;line-height:14px;color:#333;font-weight:normal;letter-spacing:0.214px;">0</div>
<svg class="r" style="left:232px;top:434px" width="14" height="10" viewBox="0 0 14 10"><g fill="#1e1e1e"><rect x="0.6" y="2" width="1.1" height="1.8"/><rect x="2.5" y="2" width="1.1" height="1.8"/><rect x="4.4" y="2" width="5.4" height="1.8"/><path d="M9.3 0 L13.6 2.9 L9.3 5.8 Z"/><rect x="3.8" y="6.6" width="5.4" height="1.8"/><rect x="10.1" y="6.6" width="1.1" height="1.8"/><rect x="12" y="6.6" width="1.1" height="1.8"/><path d="M4.3 4.6 L0 7.5 L4.3 10.4 Z"/></g></svg>
<svg class="r" style="left:932px;top:433px" width="14" height="14" viewBox="-7 -7 14 14"><g fill="#222"><path fill-rule="evenodd" d="M-4.2,-3.7 L4.2,-3.7 L4.2,3.7 L-4.2,3.7 Z M2.1,0 A2.1,2.1 0 1 0 -2.1,0 A2.1,2.1 0 1 0 2.1,0 Z"/><rect x="-1" y="-6" width="2" height="2.4"/><rect x="-1" y="3.6" width="2" height="2.4"/><rect x="-6" y="-1" width="2" height="2"/><rect x="4" y="-1" width="2" height="2"/><rect x="-5.1" y="-4.6" width="1.7" height="1.7"/><rect x="3.4" y="-4.6" width="1.7" height="1.7"/><rect x="-5.1" y="2.9" width="1.7" height="1.7"/><rect x="3.4" y="2.9" width="1.7" height="1.7"/></g></svg>
<div class="r" style="left:0;top:454px;width:963px;height:27px;background:#fff;border-top:1px solid #ddd"></div>
<div class="t" style="left:3px;top:461.00px;font-size:14px;line-height:14px;color:#333;font-weight:normal;letter-spacing:0.214px;">22</div>
<div class="t" style="left:48px;top:461.00px;font-size:14px;line-height:14px;color:#333;font-weight:normal;letter-spacing:0.078px;">L&amp;S Fiber LAG 5</div>
<div class="t" style="left:212px;top:461.00px;font-size:14px;line-height:14px;color:#333;font-weight:normal;letter-spacing:0.162px;">1G</div>
<div class="t" style="left:293px;top:461.00px;font-size:14px;line-height:14px;color:#333;font-weight:normal;letter-spacing:0.110px;">Off</div>
<div class="t" style="left:347px;top:461.00px;font-size:14px;line-height:14px;color:#333;font-weight:normal;letter-spacing:0.179px;">0.0</div>
<div class="t" style="left:406px;top:461.00px;font-size:14px;line-height:14px;color:#333;font-weight:normal;letter-spacing:0.118px;">119.45 GB</div>
<div class="t" style="left:526px;top:461.00px;font-size:14px;line-height:14px;color:#333;font-weight:normal;letter-spacing:0.106px;">91.60 GB</div>
<div class="t" style="left:646px;top:461.00px;font-size:14px;line-height:14px;color:#333;font-weight:normal;letter-spacing:0.245px;">212M</div>
<div class="t" style="left:755px;top:461.00px;font-size:14px;line-height:14px;color:#333;font-weight:normal;letter-spacing:0.245px;">266M</div>
<div class="t" style="left:865px;top:461.00px;font-size:14px;line-height:14px;color:#333;font-weight:normal;letter-spacing:0.214px;">0</div>
<svg class="r" style="left:232px;top:462px" width="14" height="10" viewBox="0 0 14 10"><g fill="#1e1e1e"><rect x="0.6" y="2" width="1.1" height="1.8"/><rect x="2.5" y="2" width="1.1" height="1.8"/><rect x="4.4" y="2" width="5.4" height="1.8"/><path d="M9.3 0 L13.6 2.9 L9.3 5.8 Z"/><rect x="3.8" y="6.6" width="5.4" height="1.8"/><rect x="10.1" y="6.6" width="1.1" height="1.8"/><rect x="12" y="6.6" width="1.1" height="1.8"/><path d="M4.3 4.6 L0 7.5 L4.3 10.4 Z"/></g></svg>
<svg class="r" style="left:932px;top:461px" width="14" height="14" viewBox="-7 -7 14 14"><g fill="#222"><path fill-rule="evenodd" d="M-4.2,-3.7 L4.2,-3.7 L4.2,3.7 L-4.2,3.7 Z M2.1,0 A2.1,2.1 0 1 0 -2.1,0 A2.1,2.1 0 1 0 2.1,0 Z"/><rect x="-1" y="-6" width="2" height="2.4"/><rect x="-1" y="3.6" width="2" height="2.4"/><rect x="-6" y="-1" width="2" height="2"/><rect x="4" y="-1" width="2" height="2"/><rect x="-5.1" y="-4.6" width="1.7" height="1.7"/><rect x="3.4" y="-4.6" width="1.7" height="1.7"/><rect x="-5.1" y="2.9" width="1.7" height="1.7"/><rect x="3.4" y="2.9" width="1.7" height="1.7"/></g></svg>
<div class="r" style="left:0;top:482px;width:963px;height:27px;background:#f2f2f2;border-top:1px solid #ddd"></div>
<div class="t" style="left:3px;top:489.00px;font-size:14px;line-height:14px;color:#333;font-weight:normal;letter-spacing:0.214px;">23</div>
<div class="t" style="left:48px;top:489.00px;font-size:14px;line-height:14px;color:#333;font-weight:normal;letter-spacing:0.105px;">BV01 Lagg G0/1</div>
<div class="t" style="left:212px;top:489.00px;font-size:14px;line-height:14px;color:#333;font-weight:normal;letter-spacing:0.162px;">1G</div>
<div class="t" style="left:293px;top:489.00px;font-size:14px;line-height:14px;color:#333;font-weight:normal;letter-spacing:0.110px;">Off</div>
<div class="t" style="left:347px;top:489.00px;font-size:14px;line-height:14px;color:#333;font-weight:normal;letter-spacing:0.179px;">0.0</div>
<div class="t" style="left:406px;top:489.00px;font-size:14px;line-height:14px;color:#333;font-weight:normal;letter-spacing:0.128px;">3555.05 GB</div>
<div class="t" style="left:526px;top:489.00px;font-size:14px;line-height:14px;color:#333;font-weight:normal;letter-spacing:0.128px;">3808.27 GB</div>
<div class="t" style="left:646px;top:489.00px;font-size:14px;line-height:14px;color:#333;font-weight:normal;letter-spacing:-0.062px;">5B</div>
<div class="t" style="left:755px;top:489.00px;font-size:14px;line-height:14px;color:#333;font-weight:normal;letter-spacing:-0.062px;">4B</div>
<div class="t" style="left:865px;top:489.00px;font-size:14px;line-height:14px;color:#333;font-weight:normal;letter-spacing:0.214px;">0</div>
<svg class="r" style="left:232px;top:490px" width="14" height="10" viewBox="0 0 14 10"><g fill="#1e1e1e"><rect x="0.6" y="2" width="1.1" height="1.8"/><rect x="2.5" y="2" width="1.1" height="1.8"/><rect x="4.4" y="2" width="5.4" height="1.8"/><path d="M9.3 0 L13.6 2.9 L9.3 5.8 Z"/><rect x="3.8" y="6.6" width="5.4" height="1.8"/><rect x="10.1" y="6.6" width="1.1" height="1.8"/><rect x="12" y="6.6" width="1.1" height="1.8"/><path d="M4.3 4.6 L0 7.5 L4.3 10.4 Z"/></g></svg>
<svg class="r" style="left:932px;top:489px" width="14" height="14" viewBox="-7 -7 14 14"><g fill="#222"><path fill-rule="evenodd" d="M-4.2,-3.7 L4.2,-3.7 L4.2,3.7 L-4.2,3.7 Z M2.1,0 A2.1,2.1 0 1 0 -2.1,0 A2.1,2.1 0 1 0 2.1,0 Z"/><rect x="-1" y="-6" width="2" height="2.4"/><rect x="-1" y="3.6" width="2" height="2.4"/><rect x="-6" y="-1" width="2" height="2"/><rect x="4" y="-1" width="2" height="2"/><rect x="-5.1" y="-4.6" width="1.7" height="1.7"/><rect x="3.4" y="-4.6" width="1.7" height="1.7"/><rect x="-5.1" y="2.9" width="1.7" height="1.7"/><rect x="3.4" y="2.9" width="1.7" height="1.7"/></g></svg>
<div class="r" style="left:0;top:510px;width:963px;height:27px;background:#fff;border-top:1px solid #ddd"></div>
<div class="t" style="left:3px;top:517.00px;font-size:14px;line-height:14px;color:#333;font-weight:normal;letter-spacing:0.214px;">24</div>
<div class="t" style="left:48px;top:517.00px;font-size:14px;line-height:14px;color:#333;font-weight:normal;letter-spacing:0.105px;">BV01 Lagg G0/0</div>
<div class="t" style="left:212px;top:517.00px;font-size:14px;line-height:14px;color:#333;font-weight:normal;letter-spacing:0.162px;">1G</div>
<div class="t" style="left:293px;top:517.00px;font-size:14px;line-height:14px;color:#333;font-weight:normal;letter-spacing:0.110px;">Off</div>
<div class="t" style="left:347px;top:517.00px;font-size:14px;line-height:14px;color:#333;font-weight:normal;letter-spacing:0.179px;">0.0</div>
<div class="t" style="left:406px;top:517.00px;font-size:14px;line-height:14px;color:#333;font-weight:normal;letter-spacing:0.128px;">2338.31 GB</div>
<div class="t" style="left:526px;top:517.00px;font-size:14px;line-height:14px;color:#333;font-weight:normal;letter-spacing:0.128px;">1818.97 GB</div>
<div class="t" style="left:646px;top:517.00px;font-size:14px;line-height:14px;color:#333;font-weight:normal;letter-spacing:-0.062px;">4B</div>
<div class="t" style="left:755px;top:517.00px;font-size:14px;line-height:14px;color:#333;font-weight:normal;letter-spacing:-0.062px;">1B</div>
<div class="t" style="left:865px;top:517.00px;font-size:14px;line-height:14px;color:#333;font-weight:normal;letter-spacing:0.214px;">0</div>
<svg class="r" style="left:232px;top:518px" width="14" height="10" viewBox="0 0 14 10"><g fill="#1e1e1e"><rect x="0.6" y="2" width="1.1" height="1.8"/><rect x="2.5" y="2" width="1.1" height="1.8"/><rect x="4.4" y="2" width="5.4" height="1.8"/><path d="M9.3 0 L13.6 2.9 L9.3 5.8 Z"/><rect x="3.8" y="6.6" width="5.4" height="1.8"/><rect x="10.1" y="6.6" width="1.1" height="1.8"/><rect x="12" y="6.6" width="1.1" height="1.8"/><path d="M4.3 4.6 L0 7.5 L4.3 10.4 Z"/></g></svg>
<svg class="r" style="left:932px;top:517px" width="14" height="14" viewBox="-7 -7 14 14"><g fill="#222"><path fill-rule="evenodd" d="M-4.2,-3.7 L4.2,-3.7 L4.2,3.7 L-4.2,3.7 Z M2.1,0 A2.1,2.1 0 1 0 -2.1,0 A2.1,2.1 0 1 0 2.1,0 Z"/><rect x="-1" y="-6" width="2" height="2.4"/><rect x="-1" y="3.6" width="2" height="2.4"/><rect x="-6" y="-1" width="2" height="2"/><rect x="4" y="-1" width="2" height="2"/><rect x="-5.1" y="-4.6" width="1.7" height="1.7"/><rect x="3.4" y="-4.6" width="1.7" height="1.7"/><rect x="-5.1" y="2.9" width="1.7" height="1.7"/><rect x="3.4" y="2.9" width="1.7" height="1.7"/></g></svg>
<div class="r" style="left:0;top:538px;width:963px;height:27px;background:#f2f2f2;border-top:1px solid #ddd"></div>
<div class="t" style="left:3px;top:545.00px;font-size:14px;line-height:14px;color:#333;font-weight:normal;letter-spacing:0.214px;">25</div>
<div class="t" style="left:48px;top:545.00px;font-size:14px;line-height:14px;color:#333;font-weight:normal;letter-spacing:0.099px;">HC AF24 G0/2</div>
<div class="t" style="left:212px;top:545.00px;font-size:14px;line-height:14px;color:#333;font-weight:normal;letter-spacing:0.162px;">1G</div>
<div class="t" style="left:406px;top:545.00px;font-size:14px;line-height:14px;color:#333;font-weight:normal;letter-spacing:0.135px;">21353.68 GB</div>
<div class="t" style="left:526px;top:545.00px;font-size:14px;line-height:14px;color:#333;font-weight:normal;letter-spacing:0.128px;">4403.64 GB</div>
<div class="t" style="left:646px;top:545.00px;font-size:14px;line-height:14px;color:#333;font-weight:normal;letter-spacing:0.030px;">19B</div>
<div class="t" style="left:755px;top:545.00px;font-size:14px;line-height:14px;color:#333;font-weight:normal;letter-spacing:0.030px;">12B</div>
<div class="t" style="left:865px;top:545.00px;font-size:14px;line-height:14px;color:#333;font-weight:normal;letter-spacing:0.214px;">0</div>
<svg class="r" style="left:232px;top:546px" width="14" height="10" viewBox="0 0 14 10"><g fill="#1e1e1e"><rect x="0.6" y="2" width="1.1" height="1.8"/><rect x="2.5" y="2" width="1.1" height="1.8"/><rect x="4.4" y="2" width="5.4" height="1.8"/><path d="M9.3 0 L13.6 2.9 L9.3 5.8 Z"/><rect x="3.8" y="6.6" width="5.4" height="1.8"/><rect x="10.1" y="6.6" width="1.1" height="1.8"/><rect x="12" y="6.6" width="1.1" height="1.8"/><path d="M4.3 4.6 L0 7.5 L4.3 10.4 Z"/></g></svg>
<svg class="r" style="left:932px;top:545px" width="14" height="14" viewBox="-7 -7 14 14"><g fill="#222"><path fill-rule="evenodd" d="M-4.2,-3.7 L4.2,-3.7 L4.2,3.7 L-4.2,3.7 Z M2.1,0 A2.1,2.1 0 1 0 -2.1,0 A2.1,2.1 0 1 0 2.1,0 Z"/><rect x="-1" y="-6" width="2" height="2.4"/><rect x="-1" y="3.6" width="2" height="2.4"/><rect x="-6" y="-1" width="2" height="2"/><rect x="4" y="-1" width="2" height="2"/><rect x="-5.1" y="-4.6" width="1.7" height="1.7"/><rect x="3.4" y="-4.6" width="1.7" height="1.7"/><rect x="-5.1" y="2.9" width="1.7" height="1.7"/><rect x="3.4" y="2.9" width="1.7" height="1.7"/></g></svg>
<div class="r" style="left:0;top:566px;width:963px;height:27px;background:#fff;border-top:1px solid #ddd"></div>
<div class="t" style="left:3px;top:573.00px;font-size:14px;line-height:14px;color:#333;font-weight:normal;letter-spacing:0.214px;">26</div>
<div class="t" style="left:48px;top:573.00px;font-size:14px;line-height:14px;color:#333;font-weight:normal;letter-spacing:0.092px;">DA AF24 G0/1/0</div>
<div class="t" style="left:212px;top:573.00px;font-size:14px;line-height:14px;color:#333;font-weight:normal;letter-spacing:0.162px;">1G</div>
<div class="t" style="left:406px;top:573.00px;font-size:14px;line-height:14px;color:#333;font-weight:normal;letter-spacing:0.128px;">4250.34 GB</div>
<div class="t" style="left:526px;top:573.00px;font-size:14px;line-height:14px;color:#333;font-weight:normal;letter-spacing:0.135px;">21435.66 GB</div>
<div class="t" style="left:646px;top:573.00px;font-size:14px;line-height:14px;color:#333;font-weight:normal;letter-spacing:0.030px;">12B</div>
<div class="t" style="left:755px;top:573.00px;font-size:14px;line-height:14px;color:#333;font-weight:normal;letter-spacing:0.030px;">18B</div>
<div class="t" style="left:865px;top:573.00px;font-size:14px;line-height:14px;color:#333;font-weight:normal;letter-spacing:0.214px;">0</div>
<svg class="r" style="left:232px;top:574px" width="14" height="10" viewBox="0 0 14 10"><g fill="#1e1e1e"><rect x="0.6" y="2" width="1.1" height="1.8"/><rect x="2.5" y="2" width="1.1" height="1.8"/><rect x="4.4" y="2" width="5.4" height="1.8"/><path d="M9.3 0 L13.6 2.9 L9.3 5.8 Z"/><rect x="3.8" y="6.6" width="5.4" height="1.8"/><rect x="10.1" y="6.6" width="1.1" height="1.8"/><rect x="12" y="6.6" width="1.1" height="1.8"/><path d="M4.3 4.6 L0 7.5 L4.3 10.4 Z"/></g></svg>
<svg class="r" style="left:932px;top:573px" width="14" height="14" viewBox="-7 -7 14 14"><g fill="#222"><path fill-rule="evenodd" d="M-4.2,-3.7 L4.2,-3.7 L4.2,3.7 L-4.2,3.7 Z M2.1,0 A2.1,2.1 0 1 0 -2.1,0 A2.1,2.1 0 1 0 2.1,0 Z"/><rect x="-1" y="-6" width="2" height="2.4"/><rect x="-1" y="3.6" width="2" height="2.4"/><rect x="-6" y="-1" width="2" height="2"/><rect x="4" y="-1" width="2" height="2"/><rect x="-5.1" y="-4.6" width="1.7" height="1.7"/><rect x="3.4" y="-4.6" width="1.7" height="1.7"/><rect x="-5.1" y="2.9" width="1.7" height="1.7"/><rect x="3.4" y="2.9" width="1.7" height="1.7"/></g></svg>
</div>
<div class="r" style="left:977px;top:149px;width:17px;height:593px;background:#f1f1f1;"></div>
<div class="r" style="left:979px;top:268px;width:13px;height:456px;background:#c1c1c1;"></div>
<div class="r" style="left:982px;top:156px;width:0;height:0;border-left:4px solid transparent;border-right:4px solid transparent;border-bottom:4px solid #505050"></div>
<div class="r" style="left:982px;top:731px;width:0;height:0;border-left:4px solid transparent;border-right:4px solid transparent;border-top:4px solid #505050"></div>
<svg class="r" style="left:0;top:0" width="1012" height="952" viewBox="0 0 1012 952"><g fill="none" stroke="#ed1c24" stroke-width="4.8"><rect x="10.7" y="573.6" width="270.5" height="54.4" rx="30" ry="11"/><rect x="7.7" y="632.5" width="272.8" height="53.8" rx="30" ry="11"/></g></svg>
<div class="t" style="left:30px;top:755.00px;font-size:14px;line-height:14px;color:#333;font-weight:normal;letter-spacing:0.239px;">Throughput</div>
<div class="r" style="left:29px;top:772px;width:459px;height:1px;background:#eee;"></div>
<div class="r" style="left:261px;top:752px;width:12px;height:12px;border:1px solid #ccc;background:#fff"><div style="position:absolute;left:1px;top:1px;width:10px;height:10px;background:#f00"></div></div>
<div class="t" style="left:278px;top:754.00px;font-size:11px;line-height:11px;color:#545454;font-weight:normal;letter-spacing:-0.059px;">TX: 45.34 Kbps</div>
<div class="r" style="left:375px;top:752px;width:12px;height:12px;border:1px solid #ccc;background:#fff"><div style="position:absolute;left:1px;top:1px;width:10px;height:10px;background:#00f"></div></div>
<div class="t" style="left:392.5px;top:754.00px;font-size:11px;line-height:11px;color:#545454;font-weight:normal;letter-spacing:-0.075px;">RX: 21.85 Kbps</div>
<svg class="r" style="left:0;top:0" width="1012" height="952" viewBox="0 0 1012 952"><defs><clipPath id="c1"><rect x="60" y="780" width="422" height="135"/></clipPath></defs><g stroke="#d9d9d9" stroke-width="1"><line x1="60" y1="807.5" x2="482" y2="807.5"/><line x1="60" y1="834.5" x2="482" y2="834.5"/><line x1="60" y1="861.5" x2="482" y2="861.5"/><line x1="60" y1="888.5" x2="482" y2="888.5"/><line x1="133.5" y1="780" x2="133.5" y2="915"/><line x1="205.5" y1="780" x2="205.5" y2="915"/><line x1="278.5" y1="780" x2="278.5" y2="915"/><line x1="350.5" y1="780" x2="350.5" y2="915"/><line x1="423.5" y1="780" x2="423.5" y2="915"/></g><g clip-path="url(#c1)" fill="none" stroke-linejoin="round" stroke-linecap="round"><path d="M60.0,904.0 C61.2,903.6 64.5,902.9 67.5,901.6 C70.5,900.3 74.6,897.8 77.8,896.1 C81.0,894.5 84.1,892.2 86.5,891.7 C88.9,891.2 89.8,891.5 92.0,892.9 C94.2,894.3 97.4,897.8 99.9,900.0 C102.4,902.2 104.8,904.8 107.0,906.4 C109.2,908.0 111.2,908.9 113.3,909.5 C115.4,910.1 117.1,910.0 119.7,909.9 C122.3,909.8 126.0,908.6 129.1,908.7 C132.2,908.8 134.9,909.6 138.0,910.3 C141.1,911.0 143.3,913.2 147.5,913.1 C151.7,913.0 158.7,909.8 163.3,909.5 C167.9,909.2 169.7,911.5 175.2,911.1 C180.7,910.7 189.4,907.1 196.5,907.2 C203.6,907.3 213.1,912.2 218.0,911.9 C222.9,911.6 222.9,907.8 225.9,905.6 C228.9,903.4 232.9,900.1 236.2,898.9 C239.5,897.7 243.1,899.0 245.7,898.5 C248.3,898.0 249.2,898.2 252.0,896.1 C254.8,894.0 259.4,888.0 262.3,885.8 C265.2,883.6 267.0,882.9 269.4,883.0 C271.8,883.1 274.3,884.4 276.5,886.6 C278.7,888.8 280.3,892.2 282.8,896.1 C285.3,900.0 289.0,909.5 291.5,910.3 C294.0,911.1 296.1,904.1 298.0,900.8 C299.9,897.5 301.1,893.6 302.7,890.6 C304.3,887.6 306.0,883.4 307.9,883.0 C309.8,882.6 311.8,884.8 313.8,888.2 C315.8,891.6 317.7,899.6 320.1,903.2 C322.5,906.8 324.8,909.2 328.0,909.9 C331.2,910.6 335.4,907.7 339.1,907.5 C342.8,907.3 346.5,908.9 350.2,908.7 C353.9,908.5 357.6,907.6 361.2,906.4 C364.8,905.2 369.3,902.4 371.5,901.6 C373.7,900.8 373.4,900.9 374.5,901.5 C375.6,902.1 376.6,903.2 378.0,905.5 C379.4,907.8 381.3,911.9 383.0,915.0 C384.7,918.1 386.3,924.0 388.0,924.0 C389.7,924.0 391.6,921.0 393.2,915.0 C394.8,909.0 395.9,899.6 397.3,888.3 C398.7,877.0 400.0,860.4 401.4,847.4 C402.8,834.4 404.2,818.2 405.5,810.5 C406.8,802.8 407.8,800.9 408.9,800.9 C410.0,800.9 410.9,802.8 412.3,810.5 C413.7,818.2 415.5,834.4 417.1,847.4 C418.7,860.4 420.5,877.0 421.9,888.3 C423.3,899.6 424.3,909.7 425.3,915.0 C426.3,920.3 427.0,920.0 428.0,920.0 C429.0,920.0 429.9,917.4 431.2,915.0 C432.5,912.6 434.1,908.3 435.9,905.6 C437.7,902.9 439.9,899.9 441.9,899.0 C443.9,898.1 445.3,899.4 447.8,900.2 C450.3,901.1 453.7,903.3 456.7,904.1 C459.7,904.9 462.6,905.0 465.6,905.0 C468.6,905.0 471.8,904.3 474.5,903.8 C477.2,903.3 480.8,902.5 482.0,902.2" stroke="rgba(0,0,0,0.1)" stroke-width="4" transform="translate(0,2)"/><path d="M60.0,903.2 C61.2,903.3 64.9,903.7 67.5,903.6 C70.1,903.5 73.0,903.4 75.4,902.8 C77.8,902.2 79.3,901.8 81.7,900.0 C84.1,898.2 87.2,895.0 89.6,892.1 C92.0,889.2 93.9,885.0 95.9,882.6 C98.0,880.2 100.1,878.1 101.9,877.9 C103.8,877.6 105.3,879.0 107.0,881.1 C108.7,883.2 110.2,887.2 111.8,890.6 C113.4,894.0 114.9,898.3 116.5,901.6 C118.1,904.9 119.8,908.4 121.2,910.3 C122.7,912.1 123.6,912.4 125.2,912.7 C126.8,913.0 128.6,912.0 130.7,911.9 C132.8,911.8 135.2,911.5 138.0,911.9 C140.8,912.3 143.3,914.5 147.5,914.3 C151.7,914.1 158.7,911.0 163.3,910.7 C167.9,910.4 169.7,913.5 175.2,912.7 C180.7,911.9 189.4,906.4 196.5,906.0 C203.6,905.6 211.6,910.0 217.8,910.3 C224.0,910.6 228.5,908.5 233.8,907.9 C239.1,907.2 245.4,907.4 249.6,906.4 C253.8,905.4 256.2,903.7 259.1,901.6 C262.0,899.5 264.4,895.9 267.0,893.7 C269.6,891.5 272.5,888.6 274.9,888.6 C277.3,888.6 279.1,891.0 281.2,893.7 C283.3,896.4 285.7,901.7 287.6,904.8 C289.5,907.9 291.0,911.8 292.7,912.3 C294.4,912.8 296.3,909.9 298.0,907.9 C299.7,905.9 301.0,902.2 302.7,900.0 C304.4,897.8 306.2,894.9 308.3,894.9 C310.4,894.9 313.0,897.4 315.4,900.0 C317.8,902.6 320.4,908.0 322.5,910.3 C324.6,912.5 325.2,913.2 328.0,913.5 C330.8,913.8 335.8,912.6 339.1,912.3 C342.4,912.0 345.0,913.3 347.8,911.5 C350.6,909.7 352.7,904.8 355.7,901.6 C358.7,898.4 363.1,892.8 366.0,892.1 C368.9,891.5 371.1,895.3 373.1,897.7 C375.1,900.1 376.3,903.5 377.8,906.4 C379.3,909.3 380.7,912.2 382.3,915.0 C383.9,917.8 385.8,923.0 387.5,923.0 C389.2,923.0 390.9,921.2 392.5,915.0 C394.1,908.8 395.6,896.9 397.3,885.6 C399.0,874.3 400.9,856.0 402.8,847.4 C404.7,838.8 406.7,833.7 408.6,833.7 C410.5,833.7 412.6,838.8 414.4,847.4 C416.1,856.0 417.0,874.9 419.1,885.6 C421.2,896.3 424.8,908.8 427.3,911.5 C429.8,914.2 431.8,904.5 434.2,902.0 C436.6,899.5 439.6,897.1 441.9,896.7 C444.2,896.3 445.3,898.2 447.8,899.6 C450.3,901.0 453.7,903.8 456.7,905.0 C459.7,906.2 462.6,906.3 465.6,906.8 C468.6,907.3 471.8,907.6 474.5,908.0 C477.2,908.4 480.8,908.8 482.0,908.9" stroke="rgba(0,0,0,0.1)" stroke-width="4" transform="translate(0,2)"/><path d="M60.0,904.0 C61.2,903.6 64.5,902.9 67.5,901.6 C70.5,900.3 74.6,897.8 77.8,896.1 C81.0,894.5 84.1,892.2 86.5,891.7 C88.9,891.2 89.8,891.5 92.0,892.9 C94.2,894.3 97.4,897.8 99.9,900.0 C102.4,902.2 104.8,904.8 107.0,906.4 C109.2,908.0 111.2,908.9 113.3,909.5 C115.4,910.1 117.1,910.0 119.7,909.9 C122.3,909.8 126.0,908.6 129.1,908.7 C132.2,908.8 134.9,909.6 138.0,910.3 C141.1,911.0 143.3,913.2 147.5,913.1 C151.7,913.0 158.7,909.8 163.3,909.5 C167.9,909.2 169.7,911.5 175.2,911.1 C180.7,910.7 189.4,907.1 196.5,907.2 C203.6,907.3 213.1,912.2 218.0,911.9 C222.9,911.6 222.9,907.8 225.9,905.6 C228.9,903.4 232.9,900.1 236.2,898.9 C239.5,897.7 243.1,899.0 245.7,898.5 C248.3,898.0 249.2,898.2 252.0,896.1 C254.8,894.0 259.4,888.0 262.3,885.8 C265.2,883.6 267.0,882.9 269.4,883.0 C271.8,883.1 274.3,884.4 276.5,886.6 C278.7,888.8 280.3,892.2 282.8,896.1 C285.3,900.0 289.0,909.5 291.5,910.3 C294.0,911.1 296.1,904.1 298.0,900.8 C299.9,897.5 301.1,893.6 302.7,890.6 C304.3,887.6 306.0,883.4 307.9,883.0 C309.8,882.6 311.8,884.8 313.8,888.2 C315.8,891.6 317.7,899.6 320.1,903.2 C322.5,906.8 324.8,909.2 328.0,909.9 C331.2,910.6 335.4,907.7 339.1,907.5 C342.8,907.3 346.5,908.9 350.2,908.7 C353.9,908.5 357.6,907.6 361.2,906.4 C364.8,905.2 369.3,902.4 371.5,901.6 C373.7,900.8 373.4,900.9 374.5,901.5 C375.6,902.1 376.6,903.2 378.0,905.5 C379.4,907.8 381.3,911.9 383.0,915.0 C384.7,918.1 386.3,924.0 388.0,924.0 C389.7,924.0 391.6,921.0 393.2,915.0 C394.8,909.0 395.9,899.6 397.3,888.3 C398.7,877.0 400.0,860.4 401.4,847.4 C402.8,834.4 404.2,818.2 405.5,810.5 C406.8,802.8 407.8,800.9 408.9,800.9 C410.0,800.9 410.9,802.8 412.3,810.5 C413.7,818.2 415.5,834.4 417.1,847.4 C418.7,860.4 420.5,877.0 421.9,888.3 C423.3,899.6 424.3,909.7 425.3,915.0 C426.3,920.3 427.0,920.0 428.0,920.0 C429.0,920.0 429.9,917.4 431.2,915.0 C432.5,912.6 434.1,908.3 435.9,905.6 C437.7,902.9 439.9,899.9 441.9,899.0 C443.9,898.1 445.3,899.4 447.8,900.2 C450.3,901.1 453.7,903.3 456.7,904.1 C459.7,904.9 462.6,905.0 465.6,905.0 C468.6,905.0 471.8,904.3 474.5,903.8 C477.2,903.3 480.8,902.5 482.0,902.2" stroke="#ff0000" stroke-width="2.4"/><path d="M60.0,903.2 C61.2,903.3 64.9,903.7 67.5,903.6 C70.1,903.5 73.0,903.4 75.4,902.8 C77.8,902.2 79.3,901.8 81.7,900.0 C84.1,898.2 87.2,895.0 89.6,892.1 C92.0,889.2 93.9,885.0 95.9,882.6 C98.0,880.2 100.1,878.1 101.9,877.9 C103.8,877.6 105.3,879.0 107.0,881.1 C108.7,883.2 110.2,887.2 111.8,890.6 C113.4,894.0 114.9,898.3 116.5,901.6 C118.1,904.9 119.8,908.4 121.2,910.3 C122.7,912.1 123.6,912.4 125.2,912.7 C126.8,913.0 128.6,912.0 130.7,911.9 C132.8,911.8 135.2,911.5 138.0,911.9 C140.8,912.3 143.3,914.5 147.5,914.3 C151.7,914.1 158.7,911.0 163.3,910.7 C167.9,910.4 169.7,913.5 175.2,912.7 C180.7,911.9 189.4,906.4 196.5,906.0 C203.6,905.6 211.6,910.0 217.8,910.3 C224.0,910.6 228.5,908.5 233.8,907.9 C239.1,907.2 245.4,907.4 249.6,906.4 C253.8,905.4 256.2,903.7 259.1,901.6 C262.0,899.5 264.4,895.9 267.0,893.7 C269.6,891.5 272.5,888.6 274.9,888.6 C277.3,888.6 279.1,891.0 281.2,893.7 C283.3,896.4 285.7,901.7 287.6,904.8 C289.5,907.9 291.0,911.8 292.7,912.3 C294.4,912.8 296.3,909.9 298.0,907.9 C299.7,905.9 301.0,902.2 302.7,900.0 C304.4,897.8 306.2,894.9 308.3,894.9 C310.4,894.9 313.0,897.4 315.4,900.0 C317.8,902.6 320.4,908.0 322.5,910.3 C324.6,912.5 325.2,913.2 328.0,913.5 C330.8,913.8 335.8,912.6 339.1,912.3 C342.4,912.0 345.0,913.3 347.8,911.5 C350.6,909.7 352.7,904.8 355.7,901.6 C358.7,898.4 363.1,892.8 366.0,892.1 C368.9,891.5 371.1,895.3 373.1,897.7 C375.1,900.1 376.3,903.5 377.8,906.4 C379.3,909.3 380.7,912.2 382.3,915.0 C383.9,917.8 385.8,923.0 387.5,923.0 C389.2,923.0 390.9,921.2 392.5,915.0 C394.1,908.8 395.6,896.9 397.3,885.6 C399.0,874.3 400.9,856.0 402.8,847.4 C404.7,838.8 406.7,833.7 408.6,833.7 C410.5,833.7 412.6,838.8 414.4,847.4 C416.1,856.0 417.0,874.9 419.1,885.6 C421.2,896.3 424.8,908.8 427.3,911.5 C429.8,914.2 431.8,904.5 434.2,902.0 C436.6,899.5 439.6,897.1 441.9,896.7 C444.2,896.3 445.3,898.2 447.8,899.6 C450.3,901.0 453.7,903.8 456.7,905.0 C459.7,906.2 462.6,906.3 465.6,906.8 C468.6,907.3 471.8,907.6 474.5,908.0 C477.2,908.4 480.8,908.8 482.0,908.9" stroke="#0000ff" stroke-width="2.4"/></g><rect x="60" y="780" width="422" height="136" fill="none" stroke="#4a4a4a" stroke-width="2"/></svg>
<div class="t" style="right:956px;top:776.00px;font-size:11px;line-height:11px;color:#5a5a5a;font-weight:normal;letter-spacing:-0.118px;">500</div>
<div class="t" style="right:956px;top:803.00px;font-size:11px;line-height:11px;color:#5a5a5a;font-weight:normal;letter-spacing:-0.118px;">400</div>
<div class="t" style="right:956px;top:830.00px;font-size:11px;line-height:11px;color:#5a5a5a;font-weight:normal;letter-spacing:-0.118px;">300</div>
<div class="t" style="right:956px;top:857.00px;font-size:11px;line-height:11px;color:#5a5a5a;font-weight:normal;letter-spacing:-0.118px;">200</div>
<div class="t" style="right:956px;top:884.00px;font-size:11px;line-height:11px;color:#5a5a5a;font-weight:normal;letter-spacing:-0.118px;">100</div>
<div class="t" style="right:956px;top:911.00px;font-size:11px;line-height:11px;color:#5a5a5a;font-weight:normal;letter-spacing:-0.018px;">Kbps</div>
<div class="t" style="left:519px;top:755.00px;font-size:14px;line-height:14px;color:#333;font-weight:normal;letter-spacing:0.067px;">Packet Rate</div>
<div class="r" style="left:602px;top:761px;width:0;height:0;border-left:4px solid transparent;border-right:4px solid transparent;border-top:4px solid #333"></div>
<div class="r" style="left:519px;top:772px;width:460px;height:1px;background:#eee;"></div>
<div class="r" style="left:631px;top:752px;width:12px;height:12px;border:1px solid #ccc;background:#fff"><div style="position:absolute;left:1px;top:1px;width:10px;height:10px;background:#f00"></div></div>
<div class="t" style="left:648.5px;top:754.00px;font-size:11px;line-height:11px;color:#545454;font-weight:normal;letter-spacing:-0.037px;">TX: 35.00 pps</div>
<div class="r" style="left:745px;top:752px;width:12px;height:12px;border:1px solid #ccc;background:#fff"><div style="position:absolute;left:1px;top:1px;width:10px;height:10px;background:#00f"></div></div>
<div class="t" style="left:762.5px;top:754.00px;font-size:11px;line-height:11px;color:#545454;font-weight:normal;letter-spacing:-0.055px;">RX: 17.00 pps</div>
<svg class="r" style="left:0;top:0" width="1012" height="952" viewBox="0 0 1012 952"><defs><clipPath id="c2"><rect x="543" y="780" width="429" height="135"/></clipPath></defs><g stroke="#d9d9d9" stroke-width="1"><line x1="543" y1="807.5" x2="972" y2="807.5"/><line x1="543" y1="834.5" x2="972" y2="834.5"/><line x1="543" y1="861.5" x2="972" y2="861.5"/><line x1="543" y1="888.5" x2="972" y2="888.5"/><line x1="617.5" y1="780" x2="617.5" y2="915"/><line x1="691.5" y1="780" x2="691.5" y2="915"/><line x1="764.5" y1="780" x2="764.5" y2="915"/><line x1="838.5" y1="780" x2="838.5" y2="915"/><line x1="912.5" y1="780" x2="912.5" y2="915"/></g><g clip-path="url(#c2)" fill="none" stroke-linejoin="round" stroke-linecap="round"><path d="M543.0,872.0 C544.4,871.0 547.8,867.6 551.1,866.0 C554.4,864.4 559.2,862.5 562.8,862.5 C566.4,862.5 569.9,864.1 572.9,866.0 C575.9,867.9 578.0,870.5 580.5,873.6 C583.0,876.7 585.6,880.7 588.1,884.5 C590.6,888.3 593.2,893.6 595.6,896.3 C598.0,899.0 600.2,900.8 602.3,900.9 C604.4,901.0 606.0,898.6 608.2,897.1 C610.5,895.6 613.2,891.8 615.8,892.1 C618.4,892.4 621.1,895.9 623.9,898.8 C626.6,901.7 629.5,909.3 632.3,909.3 C635.1,909.3 637.8,901.5 640.7,898.8 C643.6,896.1 647.0,893.4 649.5,892.9 C652.0,892.4 653.2,894.3 655.8,895.5 C658.4,896.7 662.1,899.8 665.1,900.1 C668.1,900.4 670.4,898.0 673.5,897.1 C676.6,896.2 680.4,894.7 683.5,894.6 C686.6,894.5 688.4,895.1 692.0,896.3 C695.6,897.5 701.4,901.7 705.1,901.8 C708.8,901.9 711.4,898.5 714.3,897.1 C717.2,895.7 719.6,894.7 722.7,893.4 C725.8,892.1 730.1,891.1 732.8,889.2 C735.5,887.3 736.6,885.9 738.7,882.0 C740.8,878.1 743.2,870.8 745.4,866.0 C747.6,861.2 750.2,855.9 752.1,853.4 C754.0,850.9 755.0,850.5 756.8,850.9 C758.6,851.3 761.1,852.2 763.1,856.0 C765.1,859.8 767.0,867.3 769.0,873.6 C771.0,879.9 773.8,889.7 775.4,893.8 C777.0,897.9 777.5,898.6 778.7,898.0 C780.0,897.4 781.2,895.9 782.9,890.4 C784.6,884.9 786.6,872.0 788.8,865.2 C791.0,858.4 793.9,851.4 796.0,849.7 C798.1,848.0 799.4,850.8 801.4,855.1 C803.4,859.4 806.0,870.3 808.1,875.3 C810.2,880.3 811.6,883.1 814.0,885.0 C816.4,886.9 819.6,885.1 822.4,886.6 C825.2,888.1 828.5,892.2 830.8,893.8 C833.0,895.3 834.2,896.2 835.9,895.9 C837.6,895.6 838.7,895.9 840.9,892.1 C843.1,888.3 846.7,877.0 849.0,873.1 C851.3,869.2 852.6,868.1 854.7,868.7 C856.8,869.3 859.2,872.8 861.6,876.9 C864.0,881.0 866.7,888.4 869.2,893.3 C871.7,898.2 874.4,906.9 876.7,906.5 C879.0,906.1 880.9,900.1 883.0,890.8 C885.1,881.4 887.4,862.4 889.3,850.4 C891.2,838.4 892.8,825.8 894.3,818.9 C895.8,812.0 896.8,809.0 898.1,808.8 C899.4,808.6 900.4,812.0 901.9,817.7 C903.4,823.4 905.2,834.9 906.9,842.9 C908.6,850.9 910.2,859.6 912.0,865.6 C913.8,871.6 915.5,877.3 917.6,878.8 C919.7,880.3 922.6,875.5 924.6,874.4 C926.6,873.3 927.3,872.0 929.5,872.4 C931.7,872.8 934.8,875.3 937.6,876.5 C940.4,877.7 943.1,879.4 946.5,879.6 C949.9,879.8 953.5,878.1 957.8,877.7 C962.0,877.3 969.6,877.5 972.0,877.4" stroke="rgba(0,0,0,0.1)" stroke-width="4" transform="translate(0,2)"/><path d="M543.0,868.5 C544.4,869.4 548.4,872.3 551.1,873.6 C553.9,874.9 556.0,876.0 559.5,876.3 C563.0,876.5 568.6,874.7 572.1,875.1 C575.6,875.5 577.3,877.2 580.5,878.7 C583.7,880.2 587.9,882.4 591.4,884.1 C594.9,885.8 598.4,886.8 601.5,888.7 C604.6,890.6 607.1,892.8 609.9,895.5 C612.6,898.2 614.8,901.7 618.0,904.7 C621.2,907.7 625.5,913.6 628.9,913.5 C632.3,913.4 635.2,906.7 638.2,903.9 C641.2,901.1 644.2,896.9 647.0,896.7 C649.8,896.6 652.5,900.9 655.0,903.0 C657.5,905.1 659.2,909.7 661.7,909.3 C664.2,908.9 667.1,903.3 670.1,900.5 C673.1,897.7 676.1,892.9 679.8,892.5 C683.4,892.1 687.8,897.1 692.0,898.0 C696.2,898.9 701.1,897.5 705.1,897.6 C709.1,897.7 712.8,899.6 716.0,898.8 C719.2,898.0 721.2,895.1 724.4,892.9 C727.6,890.7 731.5,886.3 735.3,885.8 C739.1,885.2 743.7,890.4 747.1,889.6 C750.5,888.8 753.0,883.3 755.5,881.2 C758.0,879.1 760.0,876.2 762.2,877.0 C764.5,877.8 767.3,883.4 769.0,886.2 C770.7,889.0 770.9,891.0 772.5,894.0 C774.1,897.0 776.7,904.3 778.7,904.3 C780.7,904.3 781.9,899.4 784.6,893.8 C787.3,888.2 791.9,873.2 794.7,870.7 C797.5,868.2 799.2,874.2 801.4,878.7 C803.6,883.2 805.7,893.2 808.1,898.0 C810.5,902.8 813.0,906.6 815.7,907.6 C818.4,908.6 820.7,905.8 824.1,903.9 C827.5,902.0 832.5,899.7 835.9,896.3 C839.3,892.9 841.4,887.1 844.3,883.7 C847.2,880.3 850.5,875.8 853.4,875.7 C856.3,875.6 859.0,879.6 861.6,883.2 C864.2,886.8 866.8,893.0 869.2,897.1 C871.6,901.2 873.8,908.0 876.1,907.8 C878.4,907.6 880.6,904.7 883.0,895.8 C885.4,886.9 888.1,864.3 890.6,854.2 C893.1,844.1 895.8,836.3 898.1,835.3 C900.4,834.2 902.1,840.8 904.4,847.9 C906.7,855.0 909.6,871.3 912.0,878.2 C914.4,885.1 916.4,887.7 918.9,889.5 C921.4,891.3 923.2,888.1 926.9,888.8 C930.5,889.5 935.9,893.8 940.8,893.5 C945.7,893.2 952.6,887.4 956.5,886.9 C960.4,886.4 961.5,888.7 964.1,890.3 C966.7,891.9 970.7,895.3 972.0,896.3" stroke="rgba(0,0,0,0.1)" stroke-width="4" transform="translate(0,2)"/><path d="M543.0,872.0 C544.4,871.0 547.8,867.6 551.1,866.0 C554.4,864.4 559.2,862.5 562.8,862.5 C566.4,862.5 569.9,864.1 572.9,866.0 C575.9,867.9 578.0,870.5 580.5,873.6 C583.0,876.7 585.6,880.7 588.1,884.5 C590.6,888.3 593.2,893.6 595.6,896.3 C598.0,899.0 600.2,900.8 602.3,900.9 C604.4,901.0 606.0,898.6 608.2,897.1 C610.5,895.6 613.2,891.8 615.8,892.1 C618.4,892.4 621.1,895.9 623.9,898.8 C626.6,901.7 629.5,909.3 632.3,909.3 C635.1,909.3 637.8,901.5 640.7,898.8 C643.6,896.1 647.0,893.4 649.5,892.9 C652.0,892.4 653.2,894.3 655.8,895.5 C658.4,896.7 662.1,899.8 665.1,900.1 C668.1,900.4 670.4,898.0 673.5,897.1 C676.6,896.2 680.4,894.7 683.5,894.6 C686.6,894.5 688.4,895.1 692.0,896.3 C695.6,897.5 701.4,901.7 705.1,901.8 C708.8,901.9 711.4,898.5 714.3,897.1 C717.2,895.7 719.6,894.7 722.7,893.4 C725.8,892.1 730.1,891.1 732.8,889.2 C735.5,887.3 736.6,885.9 738.7,882.0 C740.8,878.1 743.2,870.8 745.4,866.0 C747.6,861.2 750.2,855.9 752.1,853.4 C754.0,850.9 755.0,850.5 756.8,850.9 C758.6,851.3 761.1,852.2 763.1,856.0 C765.1,859.8 767.0,867.3 769.0,873.6 C771.0,879.9 773.8,889.7 775.4,893.8 C777.0,897.9 777.5,898.6 778.7,898.0 C780.0,897.4 781.2,895.9 782.9,890.4 C784.6,884.9 786.6,872.0 788.8,865.2 C791.0,858.4 793.9,851.4 796.0,849.7 C798.1,848.0 799.4,850.8 801.4,855.1 C803.4,859.4 806.0,870.3 808.1,875.3 C810.2,880.3 811.6,883.1 814.0,885.0 C816.4,886.9 819.6,885.1 822.4,886.6 C825.2,888.1 828.5,892.2 830.8,893.8 C833.0,895.3 834.2,896.2 835.9,895.9 C837.6,895.6 838.7,895.9 840.9,892.1 C843.1,888.3 846.7,877.0 849.0,873.1 C851.3,869.2 852.6,868.1 854.7,868.7 C856.8,869.3 859.2,872.8 861.6,876.9 C864.0,881.0 866.7,888.4 869.2,893.3 C871.7,898.2 874.4,906.9 876.7,906.5 C879.0,906.1 880.9,900.1 883.0,890.8 C885.1,881.4 887.4,862.4 889.3,850.4 C891.2,838.4 892.8,825.8 894.3,818.9 C895.8,812.0 896.8,809.0 898.1,808.8 C899.4,808.6 900.4,812.0 901.9,817.7 C903.4,823.4 905.2,834.9 906.9,842.9 C908.6,850.9 910.2,859.6 912.0,865.6 C913.8,871.6 915.5,877.3 917.6,878.8 C919.7,880.3 922.6,875.5 924.6,874.4 C926.6,873.3 927.3,872.0 929.5,872.4 C931.7,872.8 934.8,875.3 937.6,876.5 C940.4,877.7 943.1,879.4 946.5,879.6 C949.9,879.8 953.5,878.1 957.8,877.7 C962.0,877.3 969.6,877.5 972.0,877.4" stroke="#ff0000" stroke-width="2.4"/><path d="M543.0,868.5 C544.4,869.4 548.4,872.3 551.1,873.6 C553.9,874.9 556.0,876.0 559.5,876.3 C563.0,876.5 568.6,874.7 572.1,875.1 C575.6,875.5 577.3,877.2 580.5,878.7 C583.7,880.2 587.9,882.4 591.4,884.1 C594.9,885.8 598.4,886.8 601.5,888.7 C604.6,890.6 607.1,892.8 609.9,895.5 C612.6,898.2 614.8,901.7 618.0,904.7 C621.2,907.7 625.5,913.6 628.9,913.5 C632.3,913.4 635.2,906.7 638.2,903.9 C641.2,901.1 644.2,896.9 647.0,896.7 C649.8,896.6 652.5,900.9 655.0,903.0 C657.5,905.1 659.2,909.7 661.7,909.3 C664.2,908.9 667.1,903.3 670.1,900.5 C673.1,897.7 676.1,892.9 679.8,892.5 C683.4,892.1 687.8,897.1 692.0,898.0 C696.2,898.9 701.1,897.5 705.1,897.6 C709.1,897.7 712.8,899.6 716.0,898.8 C719.2,898.0 721.2,895.1 724.4,892.9 C727.6,890.7 731.5,886.3 735.3,885.8 C739.1,885.2 743.7,890.4 747.1,889.6 C750.5,888.8 753.0,883.3 755.5,881.2 C758.0,879.1 760.0,876.2 762.2,877.0 C764.5,877.8 767.3,883.4 769.0,886.2 C770.7,889.0 770.9,891.0 772.5,894.0 C774.1,897.0 776.7,904.3 778.7,904.3 C780.7,904.3 781.9,899.4 784.6,893.8 C787.3,888.2 791.9,873.2 794.7,870.7 C797.5,868.2 799.2,874.2 801.4,878.7 C803.6,883.2 805.7,893.2 808.1,898.0 C810.5,902.8 813.0,906.6 815.7,907.6 C818.4,908.6 820.7,905.8 824.1,903.9 C827.5,902.0 832.5,899.7 835.9,896.3 C839.3,892.9 841.4,887.1 844.3,883.7 C847.2,880.3 850.5,875.8 853.4,875.7 C856.3,875.6 859.0,879.6 861.6,883.2 C864.2,886.8 866.8,893.0 869.2,897.1 C871.6,901.2 873.8,908.0 876.1,907.8 C878.4,907.6 880.6,904.7 883.0,895.8 C885.4,886.9 888.1,864.3 890.6,854.2 C893.1,844.1 895.8,836.3 898.1,835.3 C900.4,834.2 902.1,840.8 904.4,847.9 C906.7,855.0 909.6,871.3 912.0,878.2 C914.4,885.1 916.4,887.7 918.9,889.5 C921.4,891.3 923.2,888.1 926.9,888.8 C930.5,889.5 935.9,893.8 940.8,893.5 C945.7,893.2 952.6,887.4 956.5,886.9 C960.4,886.4 961.5,888.7 964.1,890.3 C966.7,891.9 970.7,895.3 972.0,896.3" stroke="#0000ff" stroke-width="2.4"/></g><rect x="543" y="780" width="429" height="136" fill="none" stroke="#4a4a4a" stroke-width="2"/></svg>
<div class="t" style="right:473px;top:776.00px;font-size:11px;line-height:11px;color:#5a5a5a;font-weight:normal;letter-spacing:-0.118px;">125</div>
<div class="t" style="right:473px;top:803.00px;font-size:11px;line-height:11px;color:#5a5a5a;font-weight:normal;letter-spacing:-0.118px;">100</div>
<div class="t" style="right:473px;top:830.00px;font-size:11px;line-height:11px;color:#5a5a5a;font-weight:normal;letter-spacing:-0.118px;">75</div>
<div class="t" style="right:473px;top:857.00px;font-size:11px;line-height:11px;color:#5a5a5a;font-weight:normal;letter-spacing:-0.118px;">50</div>
<div class="t" style="right:473px;top:884.00px;font-size:11px;line-height:11px;color:#5a5a5a;font-weight:normal;letter-spacing:-0.118px;">25</div>
<div class="t" style="right:473px;top:911.00px;font-size:11px;line-height:11px;color:#5a5a5a;font-weight:normal;letter-spacing:0.088px;">pps</div>
<div class="r" style="left:854px;top:747px;width:119px;height:20px;border:1px solid #ccc;border-radius:3px;background:#fff"></div>
<div class="r" style="left:855px;top:748px;width:46px;height:20px;background:#e6e6e6;border-right:1px solid #adadad;border-radius:3px 0 0 3px;box-shadow:inset 0 3px 5px rgba(0,0,0,.125)"></div>
<div class="r" style="left:942px;top:748px;width:1px;height:20px;background:#ccc;"></div>
<div class="t" style="left:861px;top:752.00px;font-size:12px;line-height:12px;color:#333;font-weight:normal;letter-spacing:0.107px;">30 sec</div>
<div class="t" style="left:907px;top:752.00px;font-size:12px;line-height:12px;color:#333;font-weight:normal;letter-spacing:0.131px;">5 min</div>
<div class="t" style="left:949px;top:752.00px;font-size:12px;line-height:12px;color:#333;font-weight:normal;letter-spacing:0.081px;">1 hr</div>
<svg class="r" style="left:979px;top:750px" width="14" height="13" viewBox="0 0 14 13"><path d="M2,1.5 L12,11.5 M12,1.5 L2,11.5" stroke="#222" stroke-width="3"/></svg>
<div class="t" style="left:9px;top:937.00px;font-size:12px;line-height:12px;color:#333;font-weight:normal;letter-spacing:0.181px;">Copyright 2014-2016 Netonix</div>
</body></html>
